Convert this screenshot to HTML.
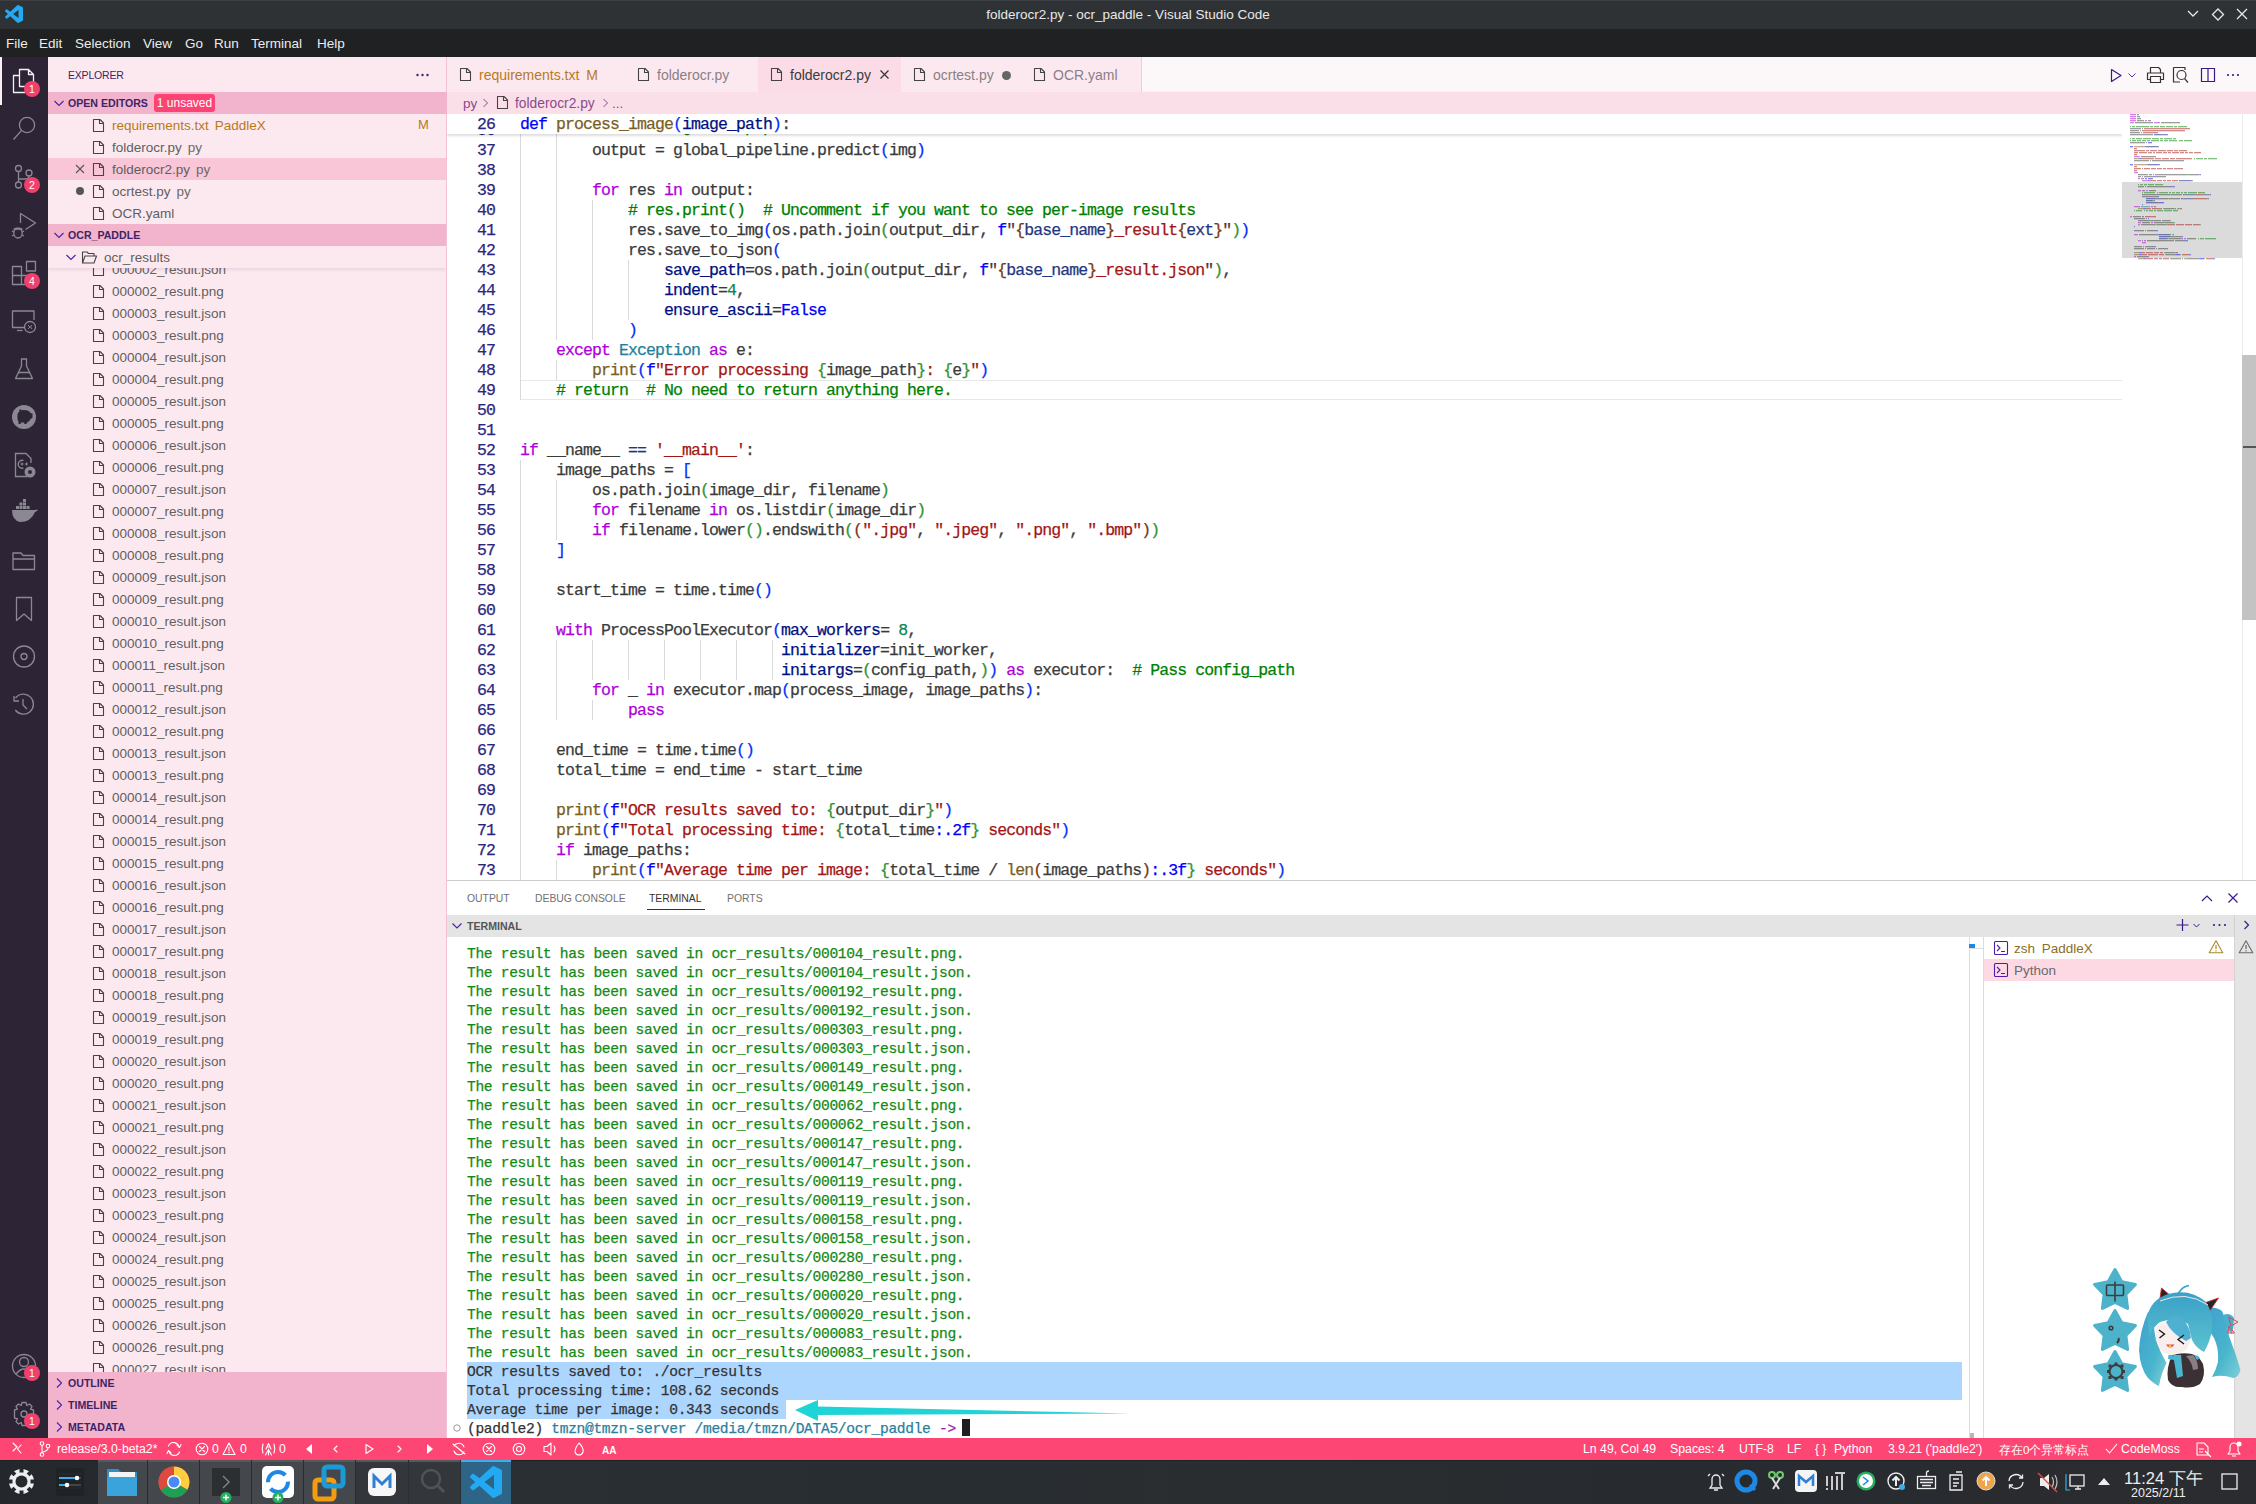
<!DOCTYPE html>
<html><head><meta charset="utf-8"><title>VS Code</title>
<style>
*{margin:0;padding:0;box-sizing:border-box}
html,body{width:2256px;height:1504px;overflow:hidden;background:#fff;font-family:"Liberation Sans",sans-serif;}
.a{position:absolute}
.mono{font-family:"Liberation Mono",monospace;-webkit-text-stroke:0.25px currentColor}
#title{left:0;top:0;width:2256px;height:29px;background:#2f3235}
#menu{left:0;top:29px;width:2256px;height:28px;background:#1f2123}
#act{left:0;top:57px;width:48px;height:1381px;background:#2d2536}
#side{left:48px;top:57px;width:399px;height:1381px;background:#fce9f0}
#tabs{left:447px;top:57px;width:1809px;height:35px;background:#fcf7f9;border-bottom:1px solid #f6f1f3}
#crumb{left:447px;top:92px;width:1809px;height:22px;background:#fbdfe8}
#code{left:447px;top:114px;width:1809px;height:767px;background:#fff}
#panel{left:447px;top:880px;width:1809px;height:558px;background:#fff;border-top:1px solid #cdcdcd}
#status{left:0;top:1438px;width:2256px;height:22px;background:#fd4673}
#task{left:0;top:1460px;width:2256px;height:44px;background:#2b2f33}

</style></head><body>
<div id="title" class="a"><div class="a" style="left:0;top:0;width:2256px;height:1px;background:#3c4044"></div>
<svg class="a" style="left:5px;top:5px" width="18" height="18" viewBox="0 0 100 100"><path fill="#23a9f2" d="M96.46 10.8 L75.86 0.87 a6.23 6.23 0 0 0-7.1 1.2 L29.35 38.04 12.19 25.01 a4.16 4.16 0 0 0-5.32.24 L1.36 30.26 a4.16 4.16 0 0 0 0 6.16 L16.26 50 1.36 63.58 a4.16 4.16 0 0 0 0 6.16 l5.51 5.01 a4.16 4.16 0 0 0 5.32.24 l17.16-13.03 39.41 35.97 a6.23 6.23 0 0 0 7.1 1.2 l20.6-9.92 A6.24 6.24 0 0 0 100 83.58 V16.42 a6.24 6.24 0 0 0-3.54-5.62 Z M75.02 72.7 45.11 50 l29.91-22.7 Z"/></svg>
<div class="a" style="left:0;width:2256px;top:7px;text-align:center;color:#e8e8e8;font-size:13.5px;line-height:16px">folderocr2.py - ocr_paddle - Visual Studio Code</div>
<svg class="a" style="left:2180px;top:4px" width="76" height="22" viewBox="0 0 76 22"><g fill="none" stroke="#e8e8e8" stroke-width="1.3"><path d="M8 7 L13 12 L18 7"/><path d="M38 5 L43.5 10.5 L38 16 L32.5 10.5 Z"/><path d="M57 5 L67 15 M67 5 L57 15"/></g></svg>
</div>
<div id="menu" class="a">
<div class="a" style="top:7px;left:7px;color:#ececec;font-size:13.5px;line-height:16px;white-space:nowrap">
<span class="a" style="left:-1px">File</span><span class="a" style="left:32px">Edit</span><span class="a" style="left:68px">Selection</span><span class="a" style="left:136px">View</span><span class="a" style="left:178px">Go</span><span class="a" style="left:207px">Run</span><span class="a" style="left:244px">Terminal</span><span class="a" style="left:310px">Help</span>
</div></div>
<div id="act" class="a"></div>
<div class="a" style="left:0;top:57px;width:2px;height:48px;background:#fdeef3"></div>
<svg class="a" style="left:0;top:57px" width="48" height="1381" viewBox="0 57 48 1381">
<g fill="none" stroke="#8c8893" stroke-width="1.3" stroke-linejoin="round">
<!-- explorer (active, white) -->
<g stroke="#f4f0f4">
<path d="M19.5 75.5 H13.5 V92.5 H25"/>
<path d="M19.5 69.5 H28.5 L33.5 74.5 V86.5 H19.5 Z M28.5 69.5 V74.5 H33.5"/>
</g>
<!-- search -->
<circle cx="27" cy="125" r="7.6"/><path d="M21.6 130.4 L13.5 139.5"/>
<!-- scm -->
<circle cx="18.5" cy="168.5" r="3"/><circle cx="18.5" cy="185" r="3"/><circle cx="29" cy="173" r="3"/>
<path d="M18.5 171.5 V182 M18.5 179 H25 Q29 179 29 176"/>
<!-- run debug -->
<path d="M20.5 223 V213.5 L35.5 223 L25.5 229.5"/>
<ellipse cx="18" cy="233" rx="4.2" ry="5"/><path d="M13.5 229 H22.5 M12 231 L14 232 M12 236 L14 235 M24 231 L22 232 M24 236 L22 235 M15 228 L16.5 230 M21 228 L19.5 230"/>
<!-- extensions -->
<path d="M12.5 266.5 H21.5 V284.5 H12.5 Z M12.5 275.5 H30.5 V284.5 H21.5"/><rect x="26.5" y="261.5" width="9" height="9.5"/>
<!-- remote -->
<path d="M25 327.5 H12.5 V311 H34 V320"/><path d="M17 330.5 H22.5"/><circle cx="30" cy="327" r="5.5"/><path d="M28 325 L30 327 L28 329 M32 325 L30.5 327 L32 329" stroke-width="1"/>
<!-- testing -->
<path d="M21 359 H27 M21.5 359 V366 L15.5 378.5 H32.5 L26.5 366 V359 M18 372.5 H30"/>
<!-- folder -->
<path d="M13 553 H21 L23 555.5 H34.5 V569.5 H13 Z M13 559 H34.5"/>
<!-- bookmark -->
<path d="M16.5 597.5 H31.5 V620.5 L24 614 L16.5 620.5 Z"/>
<!-- target -->
<circle cx="24" cy="656.5" r="10.5"/><circle cx="24" cy="656.5" r="3"/>
<!-- history -->
<path d="M15.5 698 A10 10 0 1 1 15.3 710" /><path d="M14 696 V701 H19"/><path d="M23 699 V705 L27 709"/>
<!-- accounts -->
<circle cx="24" cy="1366" r="11.5"/><circle cx="24" cy="1362" r="4.5"/><path d="M16 1374 Q24 1364 32 1374"/>
<!-- settings -->
<circle cx="24" cy="1414" r="3"/>
<path d="M22 1402.5 H26 L26.8 1405.5 L29.5 1404 L32 1406.5 L30.5 1409.2 L33.5 1410 V1418 L30.5 1418.8 L32 1421.5 L29.5 1424 L26.8 1422.5 L26 1425.5 H22 L21.2 1422.5 L18.5 1424 L16 1421.5 L17.5 1418.8 L14.5 1418 V1410 L17.5 1409.2 L16 1406.5 L18.5 1404 L21.2 1405.5 Z"/>
</g>
<g fill="#8c8893">
<!-- piggy circle -->
<circle cx="24" cy="417" r="12"/>
<!-- docker -->
<path d="M12 510 H35 Q37 509 38 510 Q36 512 35 512 Q31 522 20 522 Q12 520 12 510 Z"/>
<rect x="16" y="506" width="3" height="3"/><rect x="19.5" y="506" width="3" height="3"/><rect x="23" y="506" width="3" height="3"/><rect x="19.5" y="502.5" width="3" height="3"/><rect x="23" y="502.5" width="3" height="3"/><rect x="23" y="499" width="3" height="3"/><rect x="26.5" y="506" width="3" height="3"/>
</g>
<path d="M17.5 414 Q19 410 24 410 Q29 410 30.5 413 L32.5 413.5 V418 L30.5 419 Q29.5 422 27 422.5 L26.5 424 H24.5 L24 422.5 H21 L20.5 424 H18.5 L18.5 421.5 Q17 420 17.5 414 Z M19 411 L20 409 L22 410.5 Z" fill="#2d2536"/>
<!-- c++ page -->
<g fill="none" stroke="#8c8893" stroke-width="1.3"><path d="M27 476.5 H15.5 V453.5 H26 L31 458.5 V463"/><path d="M23.5 460.5 A4 4 0 1 0 23.5 468"/></g>
<g fill="#8c8893"><circle cx="30" cy="472" r="5.5"/><path d="M20.5 464 h3 M22 462.5 v3 M25 464 h3 M26.5 462.5 v3" stroke="#8c8893" stroke-width="1"/></g>
<circle cx="30" cy="472" r="2" fill="#2d2536"/>
<!-- badges -->
<g fill="#f0406c"><circle cx="32" cy="89" r="8"/><circle cx="32" cy="185" r="8"/><circle cx="32" cy="281" r="8"/><circle cx="32" cy="1373" r="8"/><circle cx="32" cy="1421" r="8"/></g>
<g fill="#fff" font-family="Liberation Sans" font-size="10.5" text-anchor="middle"><text x="32" y="92.8">1</text><text x="32" y="188.8">2</text><text x="32" y="284.8">4</text><text x="32" y="1376.8">1</text><text x="32" y="1424.8">1</text></g>
</svg>
<div id="side" class="a"></div>
<div class="a" style="left:48px;top:57px;width:399px;height:35px;">
<div class="a" style="left:20px;top:11px;font-size:10.5px;line-height:14px;color:#3d2466;letter-spacing:-0.2px">EXPLORER</div>
<svg class="a" style="left:366px;top:10px" width="16" height="16" viewBox="0 0 16 16"><g fill="#3d2466"><circle cx="3.5" cy="8" r="1.2"/><circle cx="8.5" cy="8" r="1.2"/><circle cx="13.5" cy="8" r="1.2"/></g></svg>
</div>
<div class="a" style="left:48px;top:92px;width:399px;height:22px;background:#f2b4cc"><svg class="a" style="left:5px;top:5px" width="12" height="12" viewBox="0 0 12 12"><path d="M1.5 4 L6 8.5 L10.5 4" fill="none" stroke="#4a1fa8" stroke-width="1.1"/></svg><div class="a" style="left:20px;top:4px;font-size:10.6px;line-height:14px;font-weight:bold;color:#3d2466;white-space:nowrap">OPEN EDITORS</div><div class="a" style="left:106px;top:2px;width:61px;height:18px;background:#fd4373;border-radius:3px;color:#fff;font-size:12px;line-height:19px;text-align:center">1 unsaved</div></div>
<div class="a" style="left:48px;top:114px;width:398px;height:22px;"><svg class="a" style="left:44px;top:4px" width="13" height="15" viewBox="0 0 13 15"><path d="M1.5 1.5 H8 L11.5 5 V13.5 H1.5 Z M7.5 1.5 V5.5 H11.5" fill="none" stroke="#444" stroke-width="1.1" stroke-linejoin="round"/></svg><div class="a" style="left:64px;top:4px;font-size:13.5px;line-height:16px;color:#b8791a;white-space:nowrap">requirements.txt<span style="color:#b8791a;margin-left:6px">PaddleX</span></div><div class="a" style="left:370px;top:3px;font-size:13px;line-height:16px;color:#b8791a">M</div></div>
<div class="a" style="left:48px;top:136px;width:398px;height:22px;"><svg class="a" style="left:44px;top:4px" width="13" height="15" viewBox="0 0 13 15"><path d="M1.5 1.5 H8 L11.5 5 V13.5 H1.5 Z M7.5 1.5 V5.5 H11.5" fill="none" stroke="#444" stroke-width="1.1" stroke-linejoin="round"/></svg><div class="a" style="left:64px;top:4px;font-size:13.5px;line-height:16px;color:#5f5f5f;white-space:nowrap">folderocr.py<span style="color:#6a6a6a;margin-left:6px">py</span></div></div>
<div class="a" style="left:48px;top:158px;width:398px;height:22px;background:#f9c6d8;"><svg class="a" style="left:44px;top:4px" width="13" height="15" viewBox="0 0 13 15"><path d="M1.5 1.5 H8 L11.5 5 V13.5 H1.5 Z M7.5 1.5 V5.5 H11.5" fill="none" stroke="#444" stroke-width="1.1" stroke-linejoin="round"/></svg><div class="a" style="left:64px;top:4px;font-size:13.5px;line-height:16px;color:#5f5f5f;white-space:nowrap">folderocr2.py<span style="color:#6a6a6a;margin-left:6px">py</span></div><svg class="a" style="left:26px;top:5px" width="12" height="12" viewBox="0 0 12 12"><path d="M2 2 L10 10 M10 2 L2 10" stroke="#555" stroke-width="1.1"/></svg></div>
<div class="a" style="left:48px;top:180px;width:398px;height:22px;"><svg class="a" style="left:44px;top:4px" width="13" height="15" viewBox="0 0 13 15"><path d="M1.5 1.5 H8 L11.5 5 V13.5 H1.5 Z M7.5 1.5 V5.5 H11.5" fill="none" stroke="#444" stroke-width="1.1" stroke-linejoin="round"/></svg><div class="a" style="left:64px;top:4px;font-size:13.5px;line-height:16px;color:#5f5f5f;white-space:nowrap">ocrtest.py<span style="color:#6a6a6a;margin-left:6px">py</span></div><div class="a" style="left:28px;top:7px;width:8px;height:8px;border-radius:4px;background:#555"></div></div>
<div class="a" style="left:48px;top:202px;width:398px;height:22px;"><svg class="a" style="left:44px;top:4px" width="13" height="15" viewBox="0 0 13 15"><path d="M1.5 1.5 H8 L11.5 5 V13.5 H1.5 Z M7.5 1.5 V5.5 H11.5" fill="none" stroke="#444" stroke-width="1.1" stroke-linejoin="round"/></svg><div class="a" style="left:64px;top:4px;font-size:13.5px;line-height:16px;color:#5f5f5f;white-space:nowrap">OCR.yaml<span style="color:#6a6a6a;margin-left:6px"></span></div></div>
<div class="a" style="left:48px;top:224px;width:399px;height:22px;background:#f2b4cc"><svg class="a" style="left:5px;top:5px" width="12" height="12" viewBox="0 0 12 12"><path d="M1.5 4 L6 8.5 L10.5 4" fill="none" stroke="#4a1fa8" stroke-width="1.1"/></svg><div class="a" style="left:20px;top:4px;font-size:10.6px;line-height:14px;font-weight:bold;color:#3d2466;white-space:nowrap">OCR_PADDLE</div></div>
<div class="a" style="left:48px;top:268px;width:398px;height:1104px;overflow:hidden">
<div class="a" style="left:0;top:-10px;width:398px;height:22px"><svg class="a" style="left:44px;top:4px" width="13" height="15" viewBox="0 0 13 15"><path d="M1.5 1.5 H8 L11.5 5 V13.5 H1.5 Z M7.5 1.5 V5.5 H11.5" fill="none" stroke="#444" stroke-width="1.1" stroke-linejoin="round"/></svg><div class="a" style="left:64px;top:4px;font-size:13.5px;line-height:16px;color:#5f5f5f;white-space:nowrap">000002_result.json</div></div>
<div class="a" style="left:0;top:12px;width:398px;height:22px"><svg class="a" style="left:44px;top:4px" width="13" height="15" viewBox="0 0 13 15"><path d="M1.5 1.5 H8 L11.5 5 V13.5 H1.5 Z M7.5 1.5 V5.5 H11.5" fill="none" stroke="#444" stroke-width="1.1" stroke-linejoin="round"/></svg><div class="a" style="left:64px;top:4px;font-size:13.5px;line-height:16px;color:#5f5f5f;white-space:nowrap">000002_result.png</div></div>
<div class="a" style="left:0;top:34px;width:398px;height:22px"><svg class="a" style="left:44px;top:4px" width="13" height="15" viewBox="0 0 13 15"><path d="M1.5 1.5 H8 L11.5 5 V13.5 H1.5 Z M7.5 1.5 V5.5 H11.5" fill="none" stroke="#444" stroke-width="1.1" stroke-linejoin="round"/></svg><div class="a" style="left:64px;top:4px;font-size:13.5px;line-height:16px;color:#5f5f5f;white-space:nowrap">000003_result.json</div></div>
<div class="a" style="left:0;top:56px;width:398px;height:22px"><svg class="a" style="left:44px;top:4px" width="13" height="15" viewBox="0 0 13 15"><path d="M1.5 1.5 H8 L11.5 5 V13.5 H1.5 Z M7.5 1.5 V5.5 H11.5" fill="none" stroke="#444" stroke-width="1.1" stroke-linejoin="round"/></svg><div class="a" style="left:64px;top:4px;font-size:13.5px;line-height:16px;color:#5f5f5f;white-space:nowrap">000003_result.png</div></div>
<div class="a" style="left:0;top:78px;width:398px;height:22px"><svg class="a" style="left:44px;top:4px" width="13" height="15" viewBox="0 0 13 15"><path d="M1.5 1.5 H8 L11.5 5 V13.5 H1.5 Z M7.5 1.5 V5.5 H11.5" fill="none" stroke="#444" stroke-width="1.1" stroke-linejoin="round"/></svg><div class="a" style="left:64px;top:4px;font-size:13.5px;line-height:16px;color:#5f5f5f;white-space:nowrap">000004_result.json</div></div>
<div class="a" style="left:0;top:100px;width:398px;height:22px"><svg class="a" style="left:44px;top:4px" width="13" height="15" viewBox="0 0 13 15"><path d="M1.5 1.5 H8 L11.5 5 V13.5 H1.5 Z M7.5 1.5 V5.5 H11.5" fill="none" stroke="#444" stroke-width="1.1" stroke-linejoin="round"/></svg><div class="a" style="left:64px;top:4px;font-size:13.5px;line-height:16px;color:#5f5f5f;white-space:nowrap">000004_result.png</div></div>
<div class="a" style="left:0;top:122px;width:398px;height:22px"><svg class="a" style="left:44px;top:4px" width="13" height="15" viewBox="0 0 13 15"><path d="M1.5 1.5 H8 L11.5 5 V13.5 H1.5 Z M7.5 1.5 V5.5 H11.5" fill="none" stroke="#444" stroke-width="1.1" stroke-linejoin="round"/></svg><div class="a" style="left:64px;top:4px;font-size:13.5px;line-height:16px;color:#5f5f5f;white-space:nowrap">000005_result.json</div></div>
<div class="a" style="left:0;top:144px;width:398px;height:22px"><svg class="a" style="left:44px;top:4px" width="13" height="15" viewBox="0 0 13 15"><path d="M1.5 1.5 H8 L11.5 5 V13.5 H1.5 Z M7.5 1.5 V5.5 H11.5" fill="none" stroke="#444" stroke-width="1.1" stroke-linejoin="round"/></svg><div class="a" style="left:64px;top:4px;font-size:13.5px;line-height:16px;color:#5f5f5f;white-space:nowrap">000005_result.png</div></div>
<div class="a" style="left:0;top:166px;width:398px;height:22px"><svg class="a" style="left:44px;top:4px" width="13" height="15" viewBox="0 0 13 15"><path d="M1.5 1.5 H8 L11.5 5 V13.5 H1.5 Z M7.5 1.5 V5.5 H11.5" fill="none" stroke="#444" stroke-width="1.1" stroke-linejoin="round"/></svg><div class="a" style="left:64px;top:4px;font-size:13.5px;line-height:16px;color:#5f5f5f;white-space:nowrap">000006_result.json</div></div>
<div class="a" style="left:0;top:188px;width:398px;height:22px"><svg class="a" style="left:44px;top:4px" width="13" height="15" viewBox="0 0 13 15"><path d="M1.5 1.5 H8 L11.5 5 V13.5 H1.5 Z M7.5 1.5 V5.5 H11.5" fill="none" stroke="#444" stroke-width="1.1" stroke-linejoin="round"/></svg><div class="a" style="left:64px;top:4px;font-size:13.5px;line-height:16px;color:#5f5f5f;white-space:nowrap">000006_result.png</div></div>
<div class="a" style="left:0;top:210px;width:398px;height:22px"><svg class="a" style="left:44px;top:4px" width="13" height="15" viewBox="0 0 13 15"><path d="M1.5 1.5 H8 L11.5 5 V13.5 H1.5 Z M7.5 1.5 V5.5 H11.5" fill="none" stroke="#444" stroke-width="1.1" stroke-linejoin="round"/></svg><div class="a" style="left:64px;top:4px;font-size:13.5px;line-height:16px;color:#5f5f5f;white-space:nowrap">000007_result.json</div></div>
<div class="a" style="left:0;top:232px;width:398px;height:22px"><svg class="a" style="left:44px;top:4px" width="13" height="15" viewBox="0 0 13 15"><path d="M1.5 1.5 H8 L11.5 5 V13.5 H1.5 Z M7.5 1.5 V5.5 H11.5" fill="none" stroke="#444" stroke-width="1.1" stroke-linejoin="round"/></svg><div class="a" style="left:64px;top:4px;font-size:13.5px;line-height:16px;color:#5f5f5f;white-space:nowrap">000007_result.png</div></div>
<div class="a" style="left:0;top:254px;width:398px;height:22px"><svg class="a" style="left:44px;top:4px" width="13" height="15" viewBox="0 0 13 15"><path d="M1.5 1.5 H8 L11.5 5 V13.5 H1.5 Z M7.5 1.5 V5.5 H11.5" fill="none" stroke="#444" stroke-width="1.1" stroke-linejoin="round"/></svg><div class="a" style="left:64px;top:4px;font-size:13.5px;line-height:16px;color:#5f5f5f;white-space:nowrap">000008_result.json</div></div>
<div class="a" style="left:0;top:276px;width:398px;height:22px"><svg class="a" style="left:44px;top:4px" width="13" height="15" viewBox="0 0 13 15"><path d="M1.5 1.5 H8 L11.5 5 V13.5 H1.5 Z M7.5 1.5 V5.5 H11.5" fill="none" stroke="#444" stroke-width="1.1" stroke-linejoin="round"/></svg><div class="a" style="left:64px;top:4px;font-size:13.5px;line-height:16px;color:#5f5f5f;white-space:nowrap">000008_result.png</div></div>
<div class="a" style="left:0;top:298px;width:398px;height:22px"><svg class="a" style="left:44px;top:4px" width="13" height="15" viewBox="0 0 13 15"><path d="M1.5 1.5 H8 L11.5 5 V13.5 H1.5 Z M7.5 1.5 V5.5 H11.5" fill="none" stroke="#444" stroke-width="1.1" stroke-linejoin="round"/></svg><div class="a" style="left:64px;top:4px;font-size:13.5px;line-height:16px;color:#5f5f5f;white-space:nowrap">000009_result.json</div></div>
<div class="a" style="left:0;top:320px;width:398px;height:22px"><svg class="a" style="left:44px;top:4px" width="13" height="15" viewBox="0 0 13 15"><path d="M1.5 1.5 H8 L11.5 5 V13.5 H1.5 Z M7.5 1.5 V5.5 H11.5" fill="none" stroke="#444" stroke-width="1.1" stroke-linejoin="round"/></svg><div class="a" style="left:64px;top:4px;font-size:13.5px;line-height:16px;color:#5f5f5f;white-space:nowrap">000009_result.png</div></div>
<div class="a" style="left:0;top:342px;width:398px;height:22px"><svg class="a" style="left:44px;top:4px" width="13" height="15" viewBox="0 0 13 15"><path d="M1.5 1.5 H8 L11.5 5 V13.5 H1.5 Z M7.5 1.5 V5.5 H11.5" fill="none" stroke="#444" stroke-width="1.1" stroke-linejoin="round"/></svg><div class="a" style="left:64px;top:4px;font-size:13.5px;line-height:16px;color:#5f5f5f;white-space:nowrap">000010_result.json</div></div>
<div class="a" style="left:0;top:364px;width:398px;height:22px"><svg class="a" style="left:44px;top:4px" width="13" height="15" viewBox="0 0 13 15"><path d="M1.5 1.5 H8 L11.5 5 V13.5 H1.5 Z M7.5 1.5 V5.5 H11.5" fill="none" stroke="#444" stroke-width="1.1" stroke-linejoin="round"/></svg><div class="a" style="left:64px;top:4px;font-size:13.5px;line-height:16px;color:#5f5f5f;white-space:nowrap">000010_result.png</div></div>
<div class="a" style="left:0;top:386px;width:398px;height:22px"><svg class="a" style="left:44px;top:4px" width="13" height="15" viewBox="0 0 13 15"><path d="M1.5 1.5 H8 L11.5 5 V13.5 H1.5 Z M7.5 1.5 V5.5 H11.5" fill="none" stroke="#444" stroke-width="1.1" stroke-linejoin="round"/></svg><div class="a" style="left:64px;top:4px;font-size:13.5px;line-height:16px;color:#5f5f5f;white-space:nowrap">000011_result.json</div></div>
<div class="a" style="left:0;top:408px;width:398px;height:22px"><svg class="a" style="left:44px;top:4px" width="13" height="15" viewBox="0 0 13 15"><path d="M1.5 1.5 H8 L11.5 5 V13.5 H1.5 Z M7.5 1.5 V5.5 H11.5" fill="none" stroke="#444" stroke-width="1.1" stroke-linejoin="round"/></svg><div class="a" style="left:64px;top:4px;font-size:13.5px;line-height:16px;color:#5f5f5f;white-space:nowrap">000011_result.png</div></div>
<div class="a" style="left:0;top:430px;width:398px;height:22px"><svg class="a" style="left:44px;top:4px" width="13" height="15" viewBox="0 0 13 15"><path d="M1.5 1.5 H8 L11.5 5 V13.5 H1.5 Z M7.5 1.5 V5.5 H11.5" fill="none" stroke="#444" stroke-width="1.1" stroke-linejoin="round"/></svg><div class="a" style="left:64px;top:4px;font-size:13.5px;line-height:16px;color:#5f5f5f;white-space:nowrap">000012_result.json</div></div>
<div class="a" style="left:0;top:452px;width:398px;height:22px"><svg class="a" style="left:44px;top:4px" width="13" height="15" viewBox="0 0 13 15"><path d="M1.5 1.5 H8 L11.5 5 V13.5 H1.5 Z M7.5 1.5 V5.5 H11.5" fill="none" stroke="#444" stroke-width="1.1" stroke-linejoin="round"/></svg><div class="a" style="left:64px;top:4px;font-size:13.5px;line-height:16px;color:#5f5f5f;white-space:nowrap">000012_result.png</div></div>
<div class="a" style="left:0;top:474px;width:398px;height:22px"><svg class="a" style="left:44px;top:4px" width="13" height="15" viewBox="0 0 13 15"><path d="M1.5 1.5 H8 L11.5 5 V13.5 H1.5 Z M7.5 1.5 V5.5 H11.5" fill="none" stroke="#444" stroke-width="1.1" stroke-linejoin="round"/></svg><div class="a" style="left:64px;top:4px;font-size:13.5px;line-height:16px;color:#5f5f5f;white-space:nowrap">000013_result.json</div></div>
<div class="a" style="left:0;top:496px;width:398px;height:22px"><svg class="a" style="left:44px;top:4px" width="13" height="15" viewBox="0 0 13 15"><path d="M1.5 1.5 H8 L11.5 5 V13.5 H1.5 Z M7.5 1.5 V5.5 H11.5" fill="none" stroke="#444" stroke-width="1.1" stroke-linejoin="round"/></svg><div class="a" style="left:64px;top:4px;font-size:13.5px;line-height:16px;color:#5f5f5f;white-space:nowrap">000013_result.png</div></div>
<div class="a" style="left:0;top:518px;width:398px;height:22px"><svg class="a" style="left:44px;top:4px" width="13" height="15" viewBox="0 0 13 15"><path d="M1.5 1.5 H8 L11.5 5 V13.5 H1.5 Z M7.5 1.5 V5.5 H11.5" fill="none" stroke="#444" stroke-width="1.1" stroke-linejoin="round"/></svg><div class="a" style="left:64px;top:4px;font-size:13.5px;line-height:16px;color:#5f5f5f;white-space:nowrap">000014_result.json</div></div>
<div class="a" style="left:0;top:540px;width:398px;height:22px"><svg class="a" style="left:44px;top:4px" width="13" height="15" viewBox="0 0 13 15"><path d="M1.5 1.5 H8 L11.5 5 V13.5 H1.5 Z M7.5 1.5 V5.5 H11.5" fill="none" stroke="#444" stroke-width="1.1" stroke-linejoin="round"/></svg><div class="a" style="left:64px;top:4px;font-size:13.5px;line-height:16px;color:#5f5f5f;white-space:nowrap">000014_result.png</div></div>
<div class="a" style="left:0;top:562px;width:398px;height:22px"><svg class="a" style="left:44px;top:4px" width="13" height="15" viewBox="0 0 13 15"><path d="M1.5 1.5 H8 L11.5 5 V13.5 H1.5 Z M7.5 1.5 V5.5 H11.5" fill="none" stroke="#444" stroke-width="1.1" stroke-linejoin="round"/></svg><div class="a" style="left:64px;top:4px;font-size:13.5px;line-height:16px;color:#5f5f5f;white-space:nowrap">000015_result.json</div></div>
<div class="a" style="left:0;top:584px;width:398px;height:22px"><svg class="a" style="left:44px;top:4px" width="13" height="15" viewBox="0 0 13 15"><path d="M1.5 1.5 H8 L11.5 5 V13.5 H1.5 Z M7.5 1.5 V5.5 H11.5" fill="none" stroke="#444" stroke-width="1.1" stroke-linejoin="round"/></svg><div class="a" style="left:64px;top:4px;font-size:13.5px;line-height:16px;color:#5f5f5f;white-space:nowrap">000015_result.png</div></div>
<div class="a" style="left:0;top:606px;width:398px;height:22px"><svg class="a" style="left:44px;top:4px" width="13" height="15" viewBox="0 0 13 15"><path d="M1.5 1.5 H8 L11.5 5 V13.5 H1.5 Z M7.5 1.5 V5.5 H11.5" fill="none" stroke="#444" stroke-width="1.1" stroke-linejoin="round"/></svg><div class="a" style="left:64px;top:4px;font-size:13.5px;line-height:16px;color:#5f5f5f;white-space:nowrap">000016_result.json</div></div>
<div class="a" style="left:0;top:628px;width:398px;height:22px"><svg class="a" style="left:44px;top:4px" width="13" height="15" viewBox="0 0 13 15"><path d="M1.5 1.5 H8 L11.5 5 V13.5 H1.5 Z M7.5 1.5 V5.5 H11.5" fill="none" stroke="#444" stroke-width="1.1" stroke-linejoin="round"/></svg><div class="a" style="left:64px;top:4px;font-size:13.5px;line-height:16px;color:#5f5f5f;white-space:nowrap">000016_result.png</div></div>
<div class="a" style="left:0;top:650px;width:398px;height:22px"><svg class="a" style="left:44px;top:4px" width="13" height="15" viewBox="0 0 13 15"><path d="M1.5 1.5 H8 L11.5 5 V13.5 H1.5 Z M7.5 1.5 V5.5 H11.5" fill="none" stroke="#444" stroke-width="1.1" stroke-linejoin="round"/></svg><div class="a" style="left:64px;top:4px;font-size:13.5px;line-height:16px;color:#5f5f5f;white-space:nowrap">000017_result.json</div></div>
<div class="a" style="left:0;top:672px;width:398px;height:22px"><svg class="a" style="left:44px;top:4px" width="13" height="15" viewBox="0 0 13 15"><path d="M1.5 1.5 H8 L11.5 5 V13.5 H1.5 Z M7.5 1.5 V5.5 H11.5" fill="none" stroke="#444" stroke-width="1.1" stroke-linejoin="round"/></svg><div class="a" style="left:64px;top:4px;font-size:13.5px;line-height:16px;color:#5f5f5f;white-space:nowrap">000017_result.png</div></div>
<div class="a" style="left:0;top:694px;width:398px;height:22px"><svg class="a" style="left:44px;top:4px" width="13" height="15" viewBox="0 0 13 15"><path d="M1.5 1.5 H8 L11.5 5 V13.5 H1.5 Z M7.5 1.5 V5.5 H11.5" fill="none" stroke="#444" stroke-width="1.1" stroke-linejoin="round"/></svg><div class="a" style="left:64px;top:4px;font-size:13.5px;line-height:16px;color:#5f5f5f;white-space:nowrap">000018_result.json</div></div>
<div class="a" style="left:0;top:716px;width:398px;height:22px"><svg class="a" style="left:44px;top:4px" width="13" height="15" viewBox="0 0 13 15"><path d="M1.5 1.5 H8 L11.5 5 V13.5 H1.5 Z M7.5 1.5 V5.5 H11.5" fill="none" stroke="#444" stroke-width="1.1" stroke-linejoin="round"/></svg><div class="a" style="left:64px;top:4px;font-size:13.5px;line-height:16px;color:#5f5f5f;white-space:nowrap">000018_result.png</div></div>
<div class="a" style="left:0;top:738px;width:398px;height:22px"><svg class="a" style="left:44px;top:4px" width="13" height="15" viewBox="0 0 13 15"><path d="M1.5 1.5 H8 L11.5 5 V13.5 H1.5 Z M7.5 1.5 V5.5 H11.5" fill="none" stroke="#444" stroke-width="1.1" stroke-linejoin="round"/></svg><div class="a" style="left:64px;top:4px;font-size:13.5px;line-height:16px;color:#5f5f5f;white-space:nowrap">000019_result.json</div></div>
<div class="a" style="left:0;top:760px;width:398px;height:22px"><svg class="a" style="left:44px;top:4px" width="13" height="15" viewBox="0 0 13 15"><path d="M1.5 1.5 H8 L11.5 5 V13.5 H1.5 Z M7.5 1.5 V5.5 H11.5" fill="none" stroke="#444" stroke-width="1.1" stroke-linejoin="round"/></svg><div class="a" style="left:64px;top:4px;font-size:13.5px;line-height:16px;color:#5f5f5f;white-space:nowrap">000019_result.png</div></div>
<div class="a" style="left:0;top:782px;width:398px;height:22px"><svg class="a" style="left:44px;top:4px" width="13" height="15" viewBox="0 0 13 15"><path d="M1.5 1.5 H8 L11.5 5 V13.5 H1.5 Z M7.5 1.5 V5.5 H11.5" fill="none" stroke="#444" stroke-width="1.1" stroke-linejoin="round"/></svg><div class="a" style="left:64px;top:4px;font-size:13.5px;line-height:16px;color:#5f5f5f;white-space:nowrap">000020_result.json</div></div>
<div class="a" style="left:0;top:804px;width:398px;height:22px"><svg class="a" style="left:44px;top:4px" width="13" height="15" viewBox="0 0 13 15"><path d="M1.5 1.5 H8 L11.5 5 V13.5 H1.5 Z M7.5 1.5 V5.5 H11.5" fill="none" stroke="#444" stroke-width="1.1" stroke-linejoin="round"/></svg><div class="a" style="left:64px;top:4px;font-size:13.5px;line-height:16px;color:#5f5f5f;white-space:nowrap">000020_result.png</div></div>
<div class="a" style="left:0;top:826px;width:398px;height:22px"><svg class="a" style="left:44px;top:4px" width="13" height="15" viewBox="0 0 13 15"><path d="M1.5 1.5 H8 L11.5 5 V13.5 H1.5 Z M7.5 1.5 V5.5 H11.5" fill="none" stroke="#444" stroke-width="1.1" stroke-linejoin="round"/></svg><div class="a" style="left:64px;top:4px;font-size:13.5px;line-height:16px;color:#5f5f5f;white-space:nowrap">000021_result.json</div></div>
<div class="a" style="left:0;top:848px;width:398px;height:22px"><svg class="a" style="left:44px;top:4px" width="13" height="15" viewBox="0 0 13 15"><path d="M1.5 1.5 H8 L11.5 5 V13.5 H1.5 Z M7.5 1.5 V5.5 H11.5" fill="none" stroke="#444" stroke-width="1.1" stroke-linejoin="round"/></svg><div class="a" style="left:64px;top:4px;font-size:13.5px;line-height:16px;color:#5f5f5f;white-space:nowrap">000021_result.png</div></div>
<div class="a" style="left:0;top:870px;width:398px;height:22px"><svg class="a" style="left:44px;top:4px" width="13" height="15" viewBox="0 0 13 15"><path d="M1.5 1.5 H8 L11.5 5 V13.5 H1.5 Z M7.5 1.5 V5.5 H11.5" fill="none" stroke="#444" stroke-width="1.1" stroke-linejoin="round"/></svg><div class="a" style="left:64px;top:4px;font-size:13.5px;line-height:16px;color:#5f5f5f;white-space:nowrap">000022_result.json</div></div>
<div class="a" style="left:0;top:892px;width:398px;height:22px"><svg class="a" style="left:44px;top:4px" width="13" height="15" viewBox="0 0 13 15"><path d="M1.5 1.5 H8 L11.5 5 V13.5 H1.5 Z M7.5 1.5 V5.5 H11.5" fill="none" stroke="#444" stroke-width="1.1" stroke-linejoin="round"/></svg><div class="a" style="left:64px;top:4px;font-size:13.5px;line-height:16px;color:#5f5f5f;white-space:nowrap">000022_result.png</div></div>
<div class="a" style="left:0;top:914px;width:398px;height:22px"><svg class="a" style="left:44px;top:4px" width="13" height="15" viewBox="0 0 13 15"><path d="M1.5 1.5 H8 L11.5 5 V13.5 H1.5 Z M7.5 1.5 V5.5 H11.5" fill="none" stroke="#444" stroke-width="1.1" stroke-linejoin="round"/></svg><div class="a" style="left:64px;top:4px;font-size:13.5px;line-height:16px;color:#5f5f5f;white-space:nowrap">000023_result.json</div></div>
<div class="a" style="left:0;top:936px;width:398px;height:22px"><svg class="a" style="left:44px;top:4px" width="13" height="15" viewBox="0 0 13 15"><path d="M1.5 1.5 H8 L11.5 5 V13.5 H1.5 Z M7.5 1.5 V5.5 H11.5" fill="none" stroke="#444" stroke-width="1.1" stroke-linejoin="round"/></svg><div class="a" style="left:64px;top:4px;font-size:13.5px;line-height:16px;color:#5f5f5f;white-space:nowrap">000023_result.png</div></div>
<div class="a" style="left:0;top:958px;width:398px;height:22px"><svg class="a" style="left:44px;top:4px" width="13" height="15" viewBox="0 0 13 15"><path d="M1.5 1.5 H8 L11.5 5 V13.5 H1.5 Z M7.5 1.5 V5.5 H11.5" fill="none" stroke="#444" stroke-width="1.1" stroke-linejoin="round"/></svg><div class="a" style="left:64px;top:4px;font-size:13.5px;line-height:16px;color:#5f5f5f;white-space:nowrap">000024_result.json</div></div>
<div class="a" style="left:0;top:980px;width:398px;height:22px"><svg class="a" style="left:44px;top:4px" width="13" height="15" viewBox="0 0 13 15"><path d="M1.5 1.5 H8 L11.5 5 V13.5 H1.5 Z M7.5 1.5 V5.5 H11.5" fill="none" stroke="#444" stroke-width="1.1" stroke-linejoin="round"/></svg><div class="a" style="left:64px;top:4px;font-size:13.5px;line-height:16px;color:#5f5f5f;white-space:nowrap">000024_result.png</div></div>
<div class="a" style="left:0;top:1002px;width:398px;height:22px"><svg class="a" style="left:44px;top:4px" width="13" height="15" viewBox="0 0 13 15"><path d="M1.5 1.5 H8 L11.5 5 V13.5 H1.5 Z M7.5 1.5 V5.5 H11.5" fill="none" stroke="#444" stroke-width="1.1" stroke-linejoin="round"/></svg><div class="a" style="left:64px;top:4px;font-size:13.5px;line-height:16px;color:#5f5f5f;white-space:nowrap">000025_result.json</div></div>
<div class="a" style="left:0;top:1024px;width:398px;height:22px"><svg class="a" style="left:44px;top:4px" width="13" height="15" viewBox="0 0 13 15"><path d="M1.5 1.5 H8 L11.5 5 V13.5 H1.5 Z M7.5 1.5 V5.5 H11.5" fill="none" stroke="#444" stroke-width="1.1" stroke-linejoin="round"/></svg><div class="a" style="left:64px;top:4px;font-size:13.5px;line-height:16px;color:#5f5f5f;white-space:nowrap">000025_result.png</div></div>
<div class="a" style="left:0;top:1046px;width:398px;height:22px"><svg class="a" style="left:44px;top:4px" width="13" height="15" viewBox="0 0 13 15"><path d="M1.5 1.5 H8 L11.5 5 V13.5 H1.5 Z M7.5 1.5 V5.5 H11.5" fill="none" stroke="#444" stroke-width="1.1" stroke-linejoin="round"/></svg><div class="a" style="left:64px;top:4px;font-size:13.5px;line-height:16px;color:#5f5f5f;white-space:nowrap">000026_result.json</div></div>
<div class="a" style="left:0;top:1068px;width:398px;height:22px"><svg class="a" style="left:44px;top:4px" width="13" height="15" viewBox="0 0 13 15"><path d="M1.5 1.5 H8 L11.5 5 V13.5 H1.5 Z M7.5 1.5 V5.5 H11.5" fill="none" stroke="#444" stroke-width="1.1" stroke-linejoin="round"/></svg><div class="a" style="left:64px;top:4px;font-size:13.5px;line-height:16px;color:#5f5f5f;white-space:nowrap">000026_result.png</div></div>
<div class="a" style="left:0;top:1090px;width:398px;height:22px"><svg class="a" style="left:44px;top:4px" width="13" height="15" viewBox="0 0 13 15"><path d="M1.5 1.5 H8 L11.5 5 V13.5 H1.5 Z M7.5 1.5 V5.5 H11.5" fill="none" stroke="#444" stroke-width="1.1" stroke-linejoin="round"/></svg><div class="a" style="left:64px;top:4px;font-size:13.5px;line-height:16px;color:#5f5f5f;white-space:nowrap">000027_result.json</div></div>
<div class="a" style="left:0;top:1112px;width:398px;height:22px"><svg class="a" style="left:44px;top:4px" width="13" height="15" viewBox="0 0 13 15"><path d="M1.5 1.5 H8 L11.5 5 V13.5 H1.5 Z M7.5 1.5 V5.5 H11.5" fill="none" stroke="#444" stroke-width="1.1" stroke-linejoin="round"/></svg><div class="a" style="left:64px;top:4px;font-size:13.5px;line-height:16px;color:#5f5f5f;white-space:nowrap">000027_result.png</div></div>
</div>
<div class="a" style="left:48px;top:246px;width:398px;height:22px;background:#fce9f0;box-shadow:0 2px 3px rgba(120,60,90,0.12)"><svg class="a" style="left:17px;top:5px" width="12" height="12" viewBox="0 0 12 12"><path d="M1.5 4 L6 8.5 L10.5 4" fill="none" stroke="#4a1fa8" stroke-width="1.1"/></svg><svg class="a" style="left:33px;top:4px" width="17" height="15" viewBox="0 0 17 15"><path d="M1.5 13 V2 H6 L7.5 3.5 H13 V6 M1.5 13 L4 6 H15.5 L13 13 Z" fill="none" stroke="#444" stroke-width="1.1" stroke-linejoin="round"/></svg><div class="a" style="left:56px;top:4px;font-size:13.5px;line-height:16px;color:#5f5f5f">ocr_results</div></div>
<div class="a" style="left:48px;top:1372px;width:399px;height:22px;background:#f2b4cc"><svg class="a" style="left:5px;top:5px" width="12" height="12" viewBox="0 0 12 12"><path d="M4 1.5 L8.5 6 L4 10.5" fill="none" stroke="#4a1fa8" stroke-width="1.1"/></svg><div class="a" style="left:20px;top:4px;font-size:10.6px;line-height:14px;font-weight:bold;color:#3d2466;white-space:nowrap">OUTLINE</div></div>
<div class="a" style="left:48px;top:1394px;width:399px;height:22px;background:#f2b4cc"><svg class="a" style="left:5px;top:5px" width="12" height="12" viewBox="0 0 12 12"><path d="M4 1.5 L8.5 6 L4 10.5" fill="none" stroke="#4a1fa8" stroke-width="1.1"/></svg><div class="a" style="left:20px;top:4px;font-size:10.6px;line-height:14px;font-weight:bold;color:#3d2466;white-space:nowrap">TIMELINE</div></div>
<div class="a" style="left:48px;top:1416px;width:399px;height:22px;background:#f2b4cc"><svg class="a" style="left:5px;top:5px" width="12" height="12" viewBox="0 0 12 12"><path d="M4 1.5 L8.5 6 L4 10.5" fill="none" stroke="#4a1fa8" stroke-width="1.1"/></svg><div class="a" style="left:20px;top:4px;font-size:10.6px;line-height:14px;font-weight:bold;color:#3d2466;white-space:nowrap">METADATA</div></div>
<div class="a" style="left:446px;top:57px;width:1px;height:1381px;background:#f5c1d4"></div><div id="tabs" class="a"></div>
<div class="a" style="left:447px;top:57px;width:179px;height:35px;background:#fce9f0;border-right:1px solid #f7c9d9">
<svg class="a" style="left:12px;top:10px" width="13" height="15" viewBox="0 0 13 15"><path d="M1.5 1.5 H8 L11.5 5 V13.5 H1.5 Z M7.5 1.5 V5.5 H11.5" fill="none" stroke="#444" stroke-width="1.1" stroke-linejoin="round"/></svg>
<div class="a" style="left:32px;top:10px;font-size:14px;line-height:16px;color:#b8791a;white-space:nowrap">requirements.txt <span style="margin-left:3px">M</span></div>
</div>
<div class="a" style="left:625px;top:57px;width:134px;height:35px;background:#fce9f0;border-right:1px solid #f7c9d9">
<svg class="a" style="left:12px;top:10px" width="13" height="15" viewBox="0 0 13 15"><path d="M1.5 1.5 H8 L11.5 5 V13.5 H1.5 Z M7.5 1.5 V5.5 H11.5" fill="none" stroke="#444" stroke-width="1.1" stroke-linejoin="round"/></svg>
<div class="a" style="left:32px;top:10px;font-size:14px;line-height:16px;color:#8a7f86;white-space:nowrap">folderocr.py</div>
</div>
<div class="a" style="left:758px;top:57px;width:144px;height:35px;background:#fbdce6;border-right:1px solid #f7c9d9">
<svg class="a" style="left:12px;top:10px" width="13" height="15" viewBox="0 0 13 15"><path d="M1.5 1.5 H8 L11.5 5 V13.5 H1.5 Z M7.5 1.5 V5.5 H11.5" fill="none" stroke="#444" stroke-width="1.1" stroke-linejoin="round"/></svg>
<div class="a" style="left:32px;top:10px;font-size:14px;line-height:16px;color:#3a3a3a;white-space:nowrap">folderocr2.py</div>
<svg class="a" style="left:120px;top:11px" width="14" height="14" viewBox="0 0 14 14"><path d="M2.5 2.5 L10.5 10.5 M10.5 2.5 L2.5 10.5" stroke="#333" stroke-width="1.2"/></svg>
</div>
<div class="a" style="left:901px;top:57px;width:121px;height:35px;background:#fce9f0;border-right:1px solid #f7c9d9">
<svg class="a" style="left:12px;top:10px" width="13" height="15" viewBox="0 0 13 15"><path d="M1.5 1.5 H8 L11.5 5 V13.5 H1.5 Z M7.5 1.5 V5.5 H11.5" fill="none" stroke="#444" stroke-width="1.1" stroke-linejoin="round"/></svg>
<div class="a" style="left:32px;top:10px;font-size:14px;line-height:16px;color:#8a7f86;white-space:nowrap">ocrtest.py</div>
<div class="a" style="left:101px;top:14px;width:9px;height:9px;border-radius:5px;background:#666"></div>
</div>
<div class="a" style="left:1021px;top:57px;width:121px;height:35px;background:#fce9f0;border-right:1px solid #f7c9d9">
<svg class="a" style="left:12px;top:10px" width="13" height="15" viewBox="0 0 13 15"><path d="M1.5 1.5 H8 L11.5 5 V13.5 H1.5 Z M7.5 1.5 V5.5 H11.5" fill="none" stroke="#444" stroke-width="1.1" stroke-linejoin="round"/></svg>
<div class="a" style="left:32px;top:10px;font-size:14px;line-height:16px;color:#8a7f86;white-space:nowrap">OCR.yaml</div>
</div>
<svg class="a" style="left:2100px;top:57px" width="156" height="35" viewBox="2100 57 156 35">
<path d="M2111.5 69.5 L2121 75.5 L2111.5 81.5 Z" fill="none" stroke="#3a1a8a" stroke-width="1.2" stroke-linejoin="round"/>
<path d="M2128.5 73.5 L2132 77 L2135.5 73.5" fill="none" stroke="#5a2ab0" stroke-width="1"/>
<g fill="none" stroke="#333" stroke-width="1.2" stroke-linejoin="round">
<path d="M2150.5 73 V67.5 H2158.5 L2160.5 69.5 V73 M2150.5 79.5 H2147.5 V73 H2163.5 V79.5 H2160.5 M2150.5 76.5 H2160.5 V82.5 H2150.5 Z"/>
<path d="M2173.5 67.5 H2185 V70 M2180 82 H2173.5 V67.5"/><circle cx="2181.5" cy="75" r="4.5"/><path d="M2184.5 78.5 L2188 82.5"/>
</g>
<path d="M2201.5 68.5 H2214.5 V81.5 H2201.5 Z M2208 68.5 V81.5" fill="none" stroke="#3a1a8a" stroke-width="1.2"/>
<g fill="#3a1a8a"><circle cx="2228" cy="75" r="1.1"/><circle cx="2233" cy="75" r="1.1"/><circle cx="2238" cy="75" r="1.1"/></g>
</svg>
<div id="crumb" class="a"></div>
<div class="a" style="left:440px;top:92px;width:7px;height:22px;background:#f2b4cc"></div>
<div class="a" style="left:463px;top:96px;font-size:13.5px;line-height:16px;color:#8a4a8e;white-space:nowrap">py</div>
<svg class="a" style="left:480px;top:95px" width="12" height="16" viewBox="0 0 12 16"><path d="M3.5 4 L7.5 8 L3.5 12" fill="none" stroke="#8a4a8e" stroke-width="1"/></svg>
<svg class="a" style="left:496px;top:95px" width="13" height="15" viewBox="0 0 13 15"><path d="M1.5 1.5 H8 L11.5 5 V13.5 H1.5 Z M7.5 1.5 V5.5 H11.5" fill="none" stroke="#444" stroke-width="1.1" stroke-linejoin="round"/></svg>
<div class="a" style="left:515px;top:96px;font-size:13.8px;line-height:16px;color:#8a4a8e;white-space:nowrap">folderocr2.py</div>
<svg class="a" style="left:600px;top:95px" width="12" height="16" viewBox="0 0 12 16"><path d="M3.5 4 L7.5 8 L3.5 12" fill="none" stroke="#8a4a8e" stroke-width="1"/></svg>
<div class="a" style="left:612px;top:96px;font-size:13.5px;line-height:16px;color:#8a4a8e;white-space:nowrap">...</div>
<div id="code" class="a"></div>
<div class="a" style="left:447px;top:114px;width:1675px;height:767px;overflow:hidden">
<div class="a" style="left:73px;top:266px;width:1602px;height:20px;border-top:1px solid #e8e8e8;border-bottom:1px solid #e8e8e8"></div>
<div class="a" style="left:73px;top:6px;width:1px;height:20px;background:#d9d9d9"></div>
<div class="a" style="left:109px;top:6px;width:1px;height:20px;background:#d9d9d9"></div>
<div class="a mono" style="left:0;top:7px;width:48px;text-align:right;font-size:16.5px;line-height:20px;letter-spacing:-0.9px;color:#2d2680">36</div>
<div class="a mono" style="left:73px;top:4px;font-size:16.5px;line-height:20px;letter-spacing:-0.9px;color:#3b3b3b;white-space:pre">        <span style="color:#008000"># Use the global pipeline</span></div>
<div class="a" style="left:73px;top:26px;width:1px;height:20px;background:#d9d9d9"></div>
<div class="a" style="left:109px;top:26px;width:1px;height:20px;background:#d9d9d9"></div>
<div class="a mono" style="left:0;top:27px;width:48px;text-align:right;font-size:16.5px;line-height:20px;letter-spacing:-0.9px;color:#2d2680">37</div>
<div class="a mono" style="left:73px;top:27px;font-size:16.5px;line-height:20px;letter-spacing:-0.9px;color:#3b3b3b;white-space:pre">        output = global_pipeline.predict<span style="color:#0431fa">(</span>img<span style="color:#0431fa">)</span></div>
<div class="a" style="left:73px;top:46px;width:1px;height:20px;background:#d9d9d9"></div>
<div class="a" style="left:109px;top:46px;width:1px;height:20px;background:#d9d9d9"></div>
<div class="a mono" style="left:0;top:47px;width:48px;text-align:right;font-size:16.5px;line-height:20px;letter-spacing:-0.9px;color:#2d2680">38</div>
<div class="a mono" style="left:73px;top:47px;font-size:16.5px;line-height:20px;letter-spacing:-0.9px;color:#3b3b3b;white-space:pre"></div>
<div class="a" style="left:73px;top:66px;width:1px;height:20px;background:#d9d9d9"></div>
<div class="a" style="left:109px;top:66px;width:1px;height:20px;background:#d9d9d9"></div>
<div class="a mono" style="left:0;top:67px;width:48px;text-align:right;font-size:16.5px;line-height:20px;letter-spacing:-0.9px;color:#2d2680">39</div>
<div class="a mono" style="left:73px;top:67px;font-size:16.5px;line-height:20px;letter-spacing:-0.9px;color:#3b3b3b;white-space:pre">        <span style="color:#af00db">for</span> res <span style="color:#af00db">in</span> output:</div>
<div class="a" style="left:73px;top:86px;width:1px;height:20px;background:#d9d9d9"></div>
<div class="a" style="left:109px;top:86px;width:1px;height:20px;background:#d9d9d9"></div>
<div class="a" style="left:145px;top:86px;width:1px;height:20px;background:#d9d9d9"></div>
<div class="a mono" style="left:0;top:87px;width:48px;text-align:right;font-size:16.5px;line-height:20px;letter-spacing:-0.9px;color:#2d2680">40</div>
<div class="a mono" style="left:73px;top:87px;font-size:16.5px;line-height:20px;letter-spacing:-0.9px;color:#3b3b3b;white-space:pre">            <span style="color:#008000"># res.print()  # Uncomment if you want to see per-image results</span></div>
<div class="a" style="left:73px;top:106px;width:1px;height:20px;background:#d9d9d9"></div>
<div class="a" style="left:109px;top:106px;width:1px;height:20px;background:#d9d9d9"></div>
<div class="a" style="left:145px;top:106px;width:1px;height:20px;background:#d9d9d9"></div>
<div class="a mono" style="left:0;top:107px;width:48px;text-align:right;font-size:16.5px;line-height:20px;letter-spacing:-0.9px;color:#2d2680">41</div>
<div class="a mono" style="left:73px;top:107px;font-size:16.5px;line-height:20px;letter-spacing:-0.9px;color:#3b3b3b;white-space:pre">            res.save_to_img<span style="color:#0431fa">(</span>os.path.join<span style="color:#319331">(</span>output_dir, <span style="color:#0000ff">f</span><span style="color:#5b3030">&quot;</span><span style="color:#7b3814">{</span><span style="color:#1f377f">base_name</span><span style="color:#7b3814">}</span><span style="color:#a31515">_result</span><span style="color:#7b3814">{</span><span style="color:#1f377f">ext</span><span style="color:#7b3814">}</span><span style="color:#5b3030">&quot;</span><span style="color:#319331">)</span><span style="color:#0431fa">)</span></div>
<div class="a" style="left:73px;top:126px;width:1px;height:20px;background:#d9d9d9"></div>
<div class="a" style="left:109px;top:126px;width:1px;height:20px;background:#d9d9d9"></div>
<div class="a" style="left:145px;top:126px;width:1px;height:20px;background:#d9d9d9"></div>
<div class="a mono" style="left:0;top:127px;width:48px;text-align:right;font-size:16.5px;line-height:20px;letter-spacing:-0.9px;color:#2d2680">42</div>
<div class="a mono" style="left:73px;top:127px;font-size:16.5px;line-height:20px;letter-spacing:-0.9px;color:#3b3b3b;white-space:pre">            res.save_to_json<span style="color:#0431fa">(</span></div>
<div class="a" style="left:73px;top:146px;width:1px;height:20px;background:#d9d9d9"></div>
<div class="a" style="left:109px;top:146px;width:1px;height:20px;background:#d9d9d9"></div>
<div class="a" style="left:145px;top:146px;width:1px;height:20px;background:#d9d9d9"></div>
<div class="a" style="left:181px;top:146px;width:1px;height:20px;background:#d9d9d9"></div>
<div class="a mono" style="left:0;top:147px;width:48px;text-align:right;font-size:16.5px;line-height:20px;letter-spacing:-0.9px;color:#2d2680">43</div>
<div class="a mono" style="left:73px;top:147px;font-size:16.5px;line-height:20px;letter-spacing:-0.9px;color:#3b3b3b;white-space:pre">                <span style="color:#001080">save_path</span>=os.path.join<span style="color:#319331">(</span>output_dir, <span style="color:#0000ff">f</span><span style="color:#5b3030">&quot;</span><span style="color:#7b3814">{</span><span style="color:#1f377f">base_name</span><span style="color:#7b3814">}</span><span style="color:#a31515">_result.json</span><span style="color:#5b3030">&quot;</span><span style="color:#319331">)</span>,</div>
<div class="a" style="left:73px;top:166px;width:1px;height:20px;background:#d9d9d9"></div>
<div class="a" style="left:109px;top:166px;width:1px;height:20px;background:#d9d9d9"></div>
<div class="a" style="left:145px;top:166px;width:1px;height:20px;background:#d9d9d9"></div>
<div class="a" style="left:181px;top:166px;width:1px;height:20px;background:#d9d9d9"></div>
<div class="a mono" style="left:0;top:167px;width:48px;text-align:right;font-size:16.5px;line-height:20px;letter-spacing:-0.9px;color:#2d2680">44</div>
<div class="a mono" style="left:73px;top:167px;font-size:16.5px;line-height:20px;letter-spacing:-0.9px;color:#3b3b3b;white-space:pre">                <span style="color:#001080">indent</span>=<span style="color:#098658">4</span>,</div>
<div class="a" style="left:73px;top:186px;width:1px;height:20px;background:#d9d9d9"></div>
<div class="a" style="left:109px;top:186px;width:1px;height:20px;background:#d9d9d9"></div>
<div class="a" style="left:145px;top:186px;width:1px;height:20px;background:#d9d9d9"></div>
<div class="a" style="left:181px;top:186px;width:1px;height:20px;background:#d9d9d9"></div>
<div class="a mono" style="left:0;top:187px;width:48px;text-align:right;font-size:16.5px;line-height:20px;letter-spacing:-0.9px;color:#2d2680">45</div>
<div class="a mono" style="left:73px;top:187px;font-size:16.5px;line-height:20px;letter-spacing:-0.9px;color:#3b3b3b;white-space:pre">                <span style="color:#001080">ensure_ascii</span>=<span style="color:#0000ff">False</span></div>
<div class="a" style="left:73px;top:206px;width:1px;height:20px;background:#d9d9d9"></div>
<div class="a" style="left:109px;top:206px;width:1px;height:20px;background:#d9d9d9"></div>
<div class="a" style="left:145px;top:206px;width:1px;height:20px;background:#d9d9d9"></div>
<div class="a mono" style="left:0;top:207px;width:48px;text-align:right;font-size:16.5px;line-height:20px;letter-spacing:-0.9px;color:#2d2680">46</div>
<div class="a mono" style="left:73px;top:207px;font-size:16.5px;line-height:20px;letter-spacing:-0.9px;color:#3b3b3b;white-space:pre">            <span style="color:#0431fa">)</span></div>
<div class="a" style="left:73px;top:226px;width:1px;height:20px;background:#d9d9d9"></div>
<div class="a mono" style="left:0;top:227px;width:48px;text-align:right;font-size:16.5px;line-height:20px;letter-spacing:-0.9px;color:#2d2680">47</div>
<div class="a mono" style="left:73px;top:227px;font-size:16.5px;line-height:20px;letter-spacing:-0.9px;color:#3b3b3b;white-space:pre">    <span style="color:#af00db">except</span> <span style="color:#267f99">Exception</span> <span style="color:#af00db">as</span> e:</div>
<div class="a" style="left:73px;top:246px;width:1px;height:20px;background:#d9d9d9"></div>
<div class="a" style="left:109px;top:246px;width:1px;height:20px;background:#d9d9d9"></div>
<div class="a mono" style="left:0;top:247px;width:48px;text-align:right;font-size:16.5px;line-height:20px;letter-spacing:-0.9px;color:#2d2680">48</div>
<div class="a mono" style="left:73px;top:247px;font-size:16.5px;line-height:20px;letter-spacing:-0.9px;color:#3b3b3b;white-space:pre">        <span style="color:#795e26">print</span><span style="color:#0431fa">(</span><span style="color:#0000ff">f</span><span style="color:#a31515">&quot;Error processing </span><span style="color:#319331">{</span>image_path<span style="color:#319331">}</span><span style="color:#a31515">: </span><span style="color:#319331">{</span>e<span style="color:#319331">}</span><span style="color:#a31515">&quot;</span><span style="color:#0431fa">)</span></div>
<div class="a" style="left:73px;top:266px;width:1px;height:20px;background:#d9d9d9"></div>
<div class="a mono" style="left:0;top:267px;width:48px;text-align:right;font-size:16.5px;line-height:20px;letter-spacing:-0.9px;color:#2d2680">49</div>
<div class="a mono" style="left:73px;top:267px;font-size:16.5px;line-height:20px;letter-spacing:-0.9px;color:#3b3b3b;white-space:pre">    <span style="color:#008000"># return  # No need to return anything here.</span></div>
<div class="a mono" style="left:0;top:287px;width:48px;text-align:right;font-size:16.5px;line-height:20px;letter-spacing:-0.9px;color:#2d2680">50</div>
<div class="a mono" style="left:73px;top:287px;font-size:16.5px;line-height:20px;letter-spacing:-0.9px;color:#3b3b3b;white-space:pre"></div>
<div class="a mono" style="left:0;top:307px;width:48px;text-align:right;font-size:16.5px;line-height:20px;letter-spacing:-0.9px;color:#2d2680">51</div>
<div class="a mono" style="left:73px;top:307px;font-size:16.5px;line-height:20px;letter-spacing:-0.9px;color:#3b3b3b;white-space:pre"></div>
<div class="a mono" style="left:0;top:327px;width:48px;text-align:right;font-size:16.5px;line-height:20px;letter-spacing:-0.9px;color:#2d2680">52</div>
<div class="a mono" style="left:73px;top:327px;font-size:16.5px;line-height:20px;letter-spacing:-0.9px;color:#3b3b3b;white-space:pre"><span style="color:#af00db">if</span> __name__ <span style="color:#1f377f">==</span> <span style="color:#a31515">&#x27;__main__&#x27;</span>:</div>
<div class="a" style="left:73px;top:346px;width:1px;height:20px;background:#d9d9d9"></div>
<div class="a mono" style="left:0;top:347px;width:48px;text-align:right;font-size:16.5px;line-height:20px;letter-spacing:-0.9px;color:#2d2680">53</div>
<div class="a mono" style="left:73px;top:347px;font-size:16.5px;line-height:20px;letter-spacing:-0.9px;color:#3b3b3b;white-space:pre">    image_paths = <span style="color:#0431fa">[</span></div>
<div class="a" style="left:73px;top:366px;width:1px;height:20px;background:#d9d9d9"></div>
<div class="a" style="left:109px;top:366px;width:1px;height:20px;background:#d9d9d9"></div>
<div class="a mono" style="left:0;top:367px;width:48px;text-align:right;font-size:16.5px;line-height:20px;letter-spacing:-0.9px;color:#2d2680">54</div>
<div class="a mono" style="left:73px;top:367px;font-size:16.5px;line-height:20px;letter-spacing:-0.9px;color:#3b3b3b;white-space:pre">        os.path.join<span style="color:#319331">(</span>image_dir, filename<span style="color:#319331">)</span></div>
<div class="a" style="left:73px;top:386px;width:1px;height:20px;background:#d9d9d9"></div>
<div class="a" style="left:109px;top:386px;width:1px;height:20px;background:#d9d9d9"></div>
<div class="a mono" style="left:0;top:387px;width:48px;text-align:right;font-size:16.5px;line-height:20px;letter-spacing:-0.9px;color:#2d2680">55</div>
<div class="a mono" style="left:73px;top:387px;font-size:16.5px;line-height:20px;letter-spacing:-0.9px;color:#3b3b3b;white-space:pre">        <span style="color:#af00db">for</span> filename <span style="color:#af00db">in</span> os.listdir<span style="color:#319331">(</span>image_dir<span style="color:#319331">)</span></div>
<div class="a" style="left:73px;top:406px;width:1px;height:20px;background:#d9d9d9"></div>
<div class="a" style="left:109px;top:406px;width:1px;height:20px;background:#d9d9d9"></div>
<div class="a mono" style="left:0;top:407px;width:48px;text-align:right;font-size:16.5px;line-height:20px;letter-spacing:-0.9px;color:#2d2680">56</div>
<div class="a mono" style="left:73px;top:407px;font-size:16.5px;line-height:20px;letter-spacing:-0.9px;color:#3b3b3b;white-space:pre">        <span style="color:#af00db">if</span> filename.lower<span style="color:#319331">()</span>.endswith<span style="color:#319331">(</span><span style="color:#7b3814">(</span><span style="color:#a31515">&quot;.jpg&quot;</span>, <span style="color:#a31515">&quot;.jpeg&quot;</span>, <span style="color:#a31515">&quot;.png&quot;</span>, <span style="color:#a31515">&quot;.bmp&quot;</span><span style="color:#7b3814">)</span><span style="color:#319331">)</span></div>
<div class="a" style="left:73px;top:426px;width:1px;height:20px;background:#d9d9d9"></div>
<div class="a mono" style="left:0;top:427px;width:48px;text-align:right;font-size:16.5px;line-height:20px;letter-spacing:-0.9px;color:#2d2680">57</div>
<div class="a mono" style="left:73px;top:427px;font-size:16.5px;line-height:20px;letter-spacing:-0.9px;color:#3b3b3b;white-space:pre">    <span style="color:#0431fa">]</span></div>
<div class="a" style="left:73px;top:446px;width:1px;height:20px;background:#d9d9d9"></div>
<div class="a mono" style="left:0;top:447px;width:48px;text-align:right;font-size:16.5px;line-height:20px;letter-spacing:-0.9px;color:#2d2680">58</div>
<div class="a mono" style="left:73px;top:447px;font-size:16.5px;line-height:20px;letter-spacing:-0.9px;color:#3b3b3b;white-space:pre"></div>
<div class="a" style="left:73px;top:466px;width:1px;height:20px;background:#d9d9d9"></div>
<div class="a mono" style="left:0;top:467px;width:48px;text-align:right;font-size:16.5px;line-height:20px;letter-spacing:-0.9px;color:#2d2680">59</div>
<div class="a mono" style="left:73px;top:467px;font-size:16.5px;line-height:20px;letter-spacing:-0.9px;color:#3b3b3b;white-space:pre">    start_time = time.time<span style="color:#0431fa">()</span></div>
<div class="a" style="left:73px;top:486px;width:1px;height:20px;background:#d9d9d9"></div>
<div class="a mono" style="left:0;top:487px;width:48px;text-align:right;font-size:16.5px;line-height:20px;letter-spacing:-0.9px;color:#2d2680">60</div>
<div class="a mono" style="left:73px;top:487px;font-size:16.5px;line-height:20px;letter-spacing:-0.9px;color:#3b3b3b;white-space:pre"></div>
<div class="a" style="left:73px;top:506px;width:1px;height:20px;background:#d9d9d9"></div>
<div class="a mono" style="left:0;top:507px;width:48px;text-align:right;font-size:16.5px;line-height:20px;letter-spacing:-0.9px;color:#2d2680">61</div>
<div class="a mono" style="left:73px;top:507px;font-size:16.5px;line-height:20px;letter-spacing:-0.9px;color:#3b3b3b;white-space:pre">    <span style="color:#af00db">with</span> ProcessPoolExecutor<span style="color:#0431fa">(</span><span style="color:#001080">max_workers</span>= <span style="color:#098658">8</span>,</div>
<div class="a" style="left:73px;top:526px;width:1px;height:20px;background:#d9d9d9"></div>
<div class="a" style="left:109px;top:526px;width:1px;height:20px;background:#d9d9d9"></div>
<div class="a" style="left:145px;top:526px;width:1px;height:20px;background:#d9d9d9"></div>
<div class="a" style="left:181px;top:526px;width:1px;height:20px;background:#d9d9d9"></div>
<div class="a" style="left:217px;top:526px;width:1px;height:20px;background:#d9d9d9"></div>
<div class="a" style="left:253px;top:526px;width:1px;height:20px;background:#d9d9d9"></div>
<div class="a" style="left:289px;top:526px;width:1px;height:20px;background:#d9d9d9"></div>
<div class="a" style="left:325px;top:526px;width:1px;height:20px;background:#d9d9d9"></div>
<div class="a mono" style="left:0;top:527px;width:48px;text-align:right;font-size:16.5px;line-height:20px;letter-spacing:-0.9px;color:#2d2680">62</div>
<div class="a mono" style="left:73px;top:527px;font-size:16.5px;line-height:20px;letter-spacing:-0.9px;color:#3b3b3b;white-space:pre">                             <span style="color:#001080">initializer</span>=init_worker,</div>
<div class="a" style="left:73px;top:546px;width:1px;height:20px;background:#d9d9d9"></div>
<div class="a" style="left:109px;top:546px;width:1px;height:20px;background:#d9d9d9"></div>
<div class="a" style="left:145px;top:546px;width:1px;height:20px;background:#d9d9d9"></div>
<div class="a" style="left:181px;top:546px;width:1px;height:20px;background:#d9d9d9"></div>
<div class="a" style="left:217px;top:546px;width:1px;height:20px;background:#d9d9d9"></div>
<div class="a" style="left:253px;top:546px;width:1px;height:20px;background:#d9d9d9"></div>
<div class="a" style="left:289px;top:546px;width:1px;height:20px;background:#d9d9d9"></div>
<div class="a" style="left:325px;top:546px;width:1px;height:20px;background:#d9d9d9"></div>
<div class="a mono" style="left:0;top:547px;width:48px;text-align:right;font-size:16.5px;line-height:20px;letter-spacing:-0.9px;color:#2d2680">63</div>
<div class="a mono" style="left:73px;top:547px;font-size:16.5px;line-height:20px;letter-spacing:-0.9px;color:#3b3b3b;white-space:pre">                             <span style="color:#001080">initargs</span>=<span style="color:#319331">(</span>config_path,<span style="color:#319331">)</span><span style="color:#0431fa">)</span> <span style="color:#af00db">as</span> executor:  <span style="color:#008000"># Pass config_path</span></div>
<div class="a" style="left:73px;top:566px;width:1px;height:20px;background:#d9d9d9"></div>
<div class="a" style="left:109px;top:566px;width:1px;height:20px;background:#d9d9d9"></div>
<div class="a mono" style="left:0;top:567px;width:48px;text-align:right;font-size:16.5px;line-height:20px;letter-spacing:-0.9px;color:#2d2680">64</div>
<div class="a mono" style="left:73px;top:567px;font-size:16.5px;line-height:20px;letter-spacing:-0.9px;color:#3b3b3b;white-space:pre">        <span style="color:#af00db">for</span> _ <span style="color:#af00db">in</span> executor.map<span style="color:#0431fa">(</span>process_image, image_paths<span style="color:#0431fa">)</span>:</div>
<div class="a" style="left:73px;top:586px;width:1px;height:20px;background:#d9d9d9"></div>
<div class="a" style="left:109px;top:586px;width:1px;height:20px;background:#d9d9d9"></div>
<div class="a" style="left:145px;top:586px;width:1px;height:20px;background:#d9d9d9"></div>
<div class="a mono" style="left:0;top:587px;width:48px;text-align:right;font-size:16.5px;line-height:20px;letter-spacing:-0.9px;color:#2d2680">65</div>
<div class="a mono" style="left:73px;top:587px;font-size:16.5px;line-height:20px;letter-spacing:-0.9px;color:#3b3b3b;white-space:pre">            <span style="color:#af00db">pass</span></div>
<div class="a" style="left:73px;top:606px;width:1px;height:20px;background:#d9d9d9"></div>
<div class="a mono" style="left:0;top:607px;width:48px;text-align:right;font-size:16.5px;line-height:20px;letter-spacing:-0.9px;color:#2d2680">66</div>
<div class="a mono" style="left:73px;top:607px;font-size:16.5px;line-height:20px;letter-spacing:-0.9px;color:#3b3b3b;white-space:pre"></div>
<div class="a" style="left:73px;top:626px;width:1px;height:20px;background:#d9d9d9"></div>
<div class="a mono" style="left:0;top:627px;width:48px;text-align:right;font-size:16.5px;line-height:20px;letter-spacing:-0.9px;color:#2d2680">67</div>
<div class="a mono" style="left:73px;top:627px;font-size:16.5px;line-height:20px;letter-spacing:-0.9px;color:#3b3b3b;white-space:pre">    end_time = time.time<span style="color:#0431fa">()</span></div>
<div class="a" style="left:73px;top:646px;width:1px;height:20px;background:#d9d9d9"></div>
<div class="a mono" style="left:0;top:647px;width:48px;text-align:right;font-size:16.5px;line-height:20px;letter-spacing:-0.9px;color:#2d2680">68</div>
<div class="a mono" style="left:73px;top:647px;font-size:16.5px;line-height:20px;letter-spacing:-0.9px;color:#3b3b3b;white-space:pre">    total_time = end_time - start_time</div>
<div class="a" style="left:73px;top:666px;width:1px;height:20px;background:#d9d9d9"></div>
<div class="a mono" style="left:0;top:667px;width:48px;text-align:right;font-size:16.5px;line-height:20px;letter-spacing:-0.9px;color:#2d2680">69</div>
<div class="a mono" style="left:73px;top:667px;font-size:16.5px;line-height:20px;letter-spacing:-0.9px;color:#3b3b3b;white-space:pre"></div>
<div class="a" style="left:73px;top:686px;width:1px;height:20px;background:#d9d9d9"></div>
<div class="a mono" style="left:0;top:687px;width:48px;text-align:right;font-size:16.5px;line-height:20px;letter-spacing:-0.9px;color:#2d2680">70</div>
<div class="a mono" style="left:73px;top:687px;font-size:16.5px;line-height:20px;letter-spacing:-0.9px;color:#3b3b3b;white-space:pre">    <span style="color:#795e26">print</span><span style="color:#0431fa">(</span><span style="color:#0000ff">f</span><span style="color:#a31515">&quot;OCR results saved to: </span><span style="color:#319331">{</span>output_dir<span style="color:#319331">}</span><span style="color:#a31515">&quot;</span><span style="color:#0431fa">)</span></div>
<div class="a" style="left:73px;top:706px;width:1px;height:20px;background:#d9d9d9"></div>
<div class="a mono" style="left:0;top:707px;width:48px;text-align:right;font-size:16.5px;line-height:20px;letter-spacing:-0.9px;color:#2d2680">71</div>
<div class="a mono" style="left:73px;top:707px;font-size:16.5px;line-height:20px;letter-spacing:-0.9px;color:#3b3b3b;white-space:pre">    <span style="color:#795e26">print</span><span style="color:#0431fa">(</span><span style="color:#0000ff">f</span><span style="color:#a31515">&quot;Total processing time: </span><span style="color:#319331">{</span>total_time<span style="color:#0000ff">:.2f</span><span style="color:#319331">}</span><span style="color:#a31515"> seconds&quot;</span><span style="color:#0431fa">)</span></div>
<div class="a" style="left:73px;top:726px;width:1px;height:20px;background:#d9d9d9"></div>
<div class="a mono" style="left:0;top:727px;width:48px;text-align:right;font-size:16.5px;line-height:20px;letter-spacing:-0.9px;color:#2d2680">72</div>
<div class="a mono" style="left:73px;top:727px;font-size:16.5px;line-height:20px;letter-spacing:-0.9px;color:#3b3b3b;white-space:pre">    <span style="color:#af00db">if</span> image_paths:</div>
<div class="a" style="left:73px;top:746px;width:1px;height:20px;background:#d9d9d9"></div>
<div class="a" style="left:109px;top:746px;width:1px;height:20px;background:#d9d9d9"></div>
<div class="a mono" style="left:0;top:747px;width:48px;text-align:right;font-size:16.5px;line-height:20px;letter-spacing:-0.9px;color:#2d2680">73</div>
<div class="a mono" style="left:73px;top:747px;font-size:16.5px;line-height:20px;letter-spacing:-0.9px;color:#3b3b3b;white-space:pre">        <span style="color:#795e26">print</span><span style="color:#0431fa">(</span><span style="color:#0000ff">f</span><span style="color:#a31515">&quot;Average time per image: </span><span style="color:#319331">{</span>total_time / <span style="color:#795e26">len</span><span style="color:#7b3814">(</span>image_paths<span style="color:#7b3814">)</span><span style="color:#0000ff">:.3f</span><span style="color:#319331">}</span><span style="color:#a31515"> seconds&quot;</span><span style="color:#0431fa">)</span></div>
<div class="a" style="left:0;top:0;width:1675px;height:20px;background:#fff;box-shadow:0 2px 2px rgba(0,0,0,0.13)">
<div class="a mono" style="left:0;top:1px;width:48px;text-align:right;font-size:16.5px;line-height:20px;letter-spacing:-0.9px;color:#2d2680">26</div>
<div class="a mono" style="left:73px;top:1px;font-size:16.5px;line-height:20px;letter-spacing:-0.9px;color:#3b3b3b;white-space:pre"><span style="color:#0000ff">def</span> <span style="color:#795e26">process_image</span><span style="color:#0431fa">(</span><span style="color:#001080">image_path</span><span style="color:#0431fa">)</span>:</div>
</div>
</div><svg class="a" style="left:2122px;top:114px" width="134" height="767" viewBox="2122 114 134 767">
<rect x="2122" y="182" width="120" height="76" fill="#000" fill-opacity="0.14"/>
<g fill-opacity="0.5"><rect x="2130" y="114" width="6" height="1.3" fill="#af00db"/><rect x="2137" y="114" width="2" height="1.3" fill="#3b3b3b"/><rect x="2130" y="116" width="6" height="1.3" fill="#af00db"/><rect x="2137" y="116" width="3" height="1.3" fill="#3b3b3b"/><rect x="2130" y="118" width="6" height="1.3" fill="#af00db"/><rect x="2137" y="118" width="4" height="1.3" fill="#3b3b3b"/><rect x="2130" y="120" width="6" height="1.3" fill="#af00db"/><rect x="2137" y="120" width="7" height="1.3" fill="#3b3b3b"/><rect x="2145" y="120" width="2" height="1.3" fill="#af00db"/><rect x="2148" y="120" width="3" height="1.3" fill="#3b3b3b"/><rect x="2130" y="122" width="4" height="1.3" fill="#af00db"/><rect x="2135" y="122" width="18" height="1.3" fill="#3b3b3b"/><rect x="2154" y="122" width="6" height="1.3" fill="#af00db"/><rect x="2161" y="122" width="19" height="1.3" fill="#3b3b3b"/><rect x="2130" y="126" width="1" height="1.3" fill="#008000"/><rect x="2132" y="126" width="3" height="1.3" fill="#008000"/><rect x="2136" y="126" width="13" height="1.3" fill="#008000"/><rect x="2150" y="126" width="3" height="1.3" fill="#008000"/><rect x="2154" y="126" width="5" height="1.3" fill="#008000"/><rect x="2160" y="126" width="5" height="1.3" fill="#008000"/><rect x="2166" y="126" width="7" height="1.3" fill="#008000"/><rect x="2174" y="126" width="3" height="1.3" fill="#008000"/><rect x="2178" y="126" width="9" height="1.3" fill="#008000"/><rect x="2130" y="128" width="11" height="1.3" fill="#3b3b3b"/><rect x="2142" y="128" width="1" height="1.3" fill="#3b3b3b"/><rect x="2144" y="128" width="46" height="1.3" fill="#a31515"/><rect x="2130" y="130" width="9" height="1.3" fill="#3b3b3b"/><rect x="2140" y="130" width="1" height="1.3" fill="#3b3b3b"/><rect x="2142" y="130" width="43" height="1.3" fill="#a31515"/><rect x="2130" y="132" width="10" height="1.3" fill="#3b3b3b"/><rect x="2141" y="132" width="1" height="1.3" fill="#3b3b3b"/><rect x="2143" y="132" width="15" height="1.3" fill="#a31515"/><rect x="2130" y="134" width="11" height="1.3" fill="#3b3b3b"/><rect x="2141" y="134" width="1" height="1.3" fill="#0431fa"/><rect x="2142" y="134" width="11" height="1.3" fill="#3b3b3b"/><rect x="2154" y="134" width="8" height="1.3" fill="#001080"/><rect x="2162" y="134" width="1" height="1.3" fill="#3b3b3b"/><rect x="2163" y="134" width="4" height="1.3" fill="#0000ff"/><rect x="2167" y="134" width="1" height="1.3" fill="#0431fa"/><rect x="2130" y="138" width="1" height="1.3" fill="#008000"/><rect x="2132" y="138" width="3" height="1.3" fill="#008000"/><rect x="2136" y="138" width="6" height="1.3" fill="#008000"/><rect x="2143" y="138" width="8" height="1.3" fill="#008000"/><rect x="2152" y="138" width="7" height="1.3" fill="#008000"/><rect x="2160" y="138" width="3" height="1.3" fill="#008000"/><rect x="2164" y="138" width="8" height="1.3" fill="#008000"/><rect x="2173" y="138" width="3" height="1.3" fill="#008000"/><rect x="2130" y="140" width="1" height="1.3" fill="#008000"/><rect x="2132" y="140" width="4" height="1.3" fill="#008000"/><rect x="2137" y="140" width="4" height="1.3" fill="#008000"/><rect x="2142" y="140" width="4" height="1.3" fill="#008000"/><rect x="2147" y="140" width="3" height="1.3" fill="#008000"/><rect x="2151" y="140" width="8" height="1.3" fill="#008000"/><rect x="2160" y="140" width="3" height="1.3" fill="#008000"/><rect x="2164" y="140" width="4" height="1.3" fill="#008000"/><rect x="2169" y="140" width="8" height="1.3" fill="#008000"/><rect x="2179" y="140" width="4" height="1.3" fill="#008000"/><rect x="2184" y="140" width="8" height="1.3" fill="#008000"/><rect x="2130" y="142" width="15" height="1.3" fill="#3b3b3b"/><rect x="2146" y="142" width="1" height="1.3" fill="#3b3b3b"/><rect x="2148" y="142" width="4" height="1.3" fill="#0000ff"/><rect x="2130" y="146" width="3" height="1.3" fill="#0000ff"/><rect x="2134" y="146" width="11" height="1.3" fill="#795e26"/><rect x="2145" y="146" width="1" height="1.3" fill="#0431fa"/><rect x="2146" y="146" width="11" height="1.3" fill="#001080"/><rect x="2157" y="146" width="1" height="1.3" fill="#0431fa"/><rect x="2158" y="146" width="1" height="1.3" fill="#3b3b3b"/><rect x="2134" y="148" width="3" height="1.3" fill="#a31515"/><rect x="2134" y="150" width="11" height="1.3" fill="#a31515"/><rect x="2146" y="150" width="3" height="1.3" fill="#a31515"/><rect x="2150" y="150" width="7" height="1.3" fill="#a31515"/><rect x="2158" y="150" width="8" height="1.3" fill="#a31515"/><rect x="2167" y="150" width="6" height="1.3" fill="#a31515"/><rect x="2174" y="150" width="4" height="1.3" fill="#a31515"/><rect x="2179" y="150" width="8" height="1.3" fill="#a31515"/><rect x="2134" y="152" width="4" height="1.3" fill="#a31515"/><rect x="2139" y="152" width="8" height="1.3" fill="#a31515"/><rect x="2148" y="152" width="4" height="1.3" fill="#a31515"/><rect x="2153" y="152" width="2" height="1.3" fill="#a31515"/><rect x="2156" y="152" width="6" height="1.3" fill="#a31515"/><rect x="2163" y="152" width="4" height="1.3" fill="#a31515"/><rect x="2168" y="152" width="3" height="1.3" fill="#a31515"/><rect x="2172" y="152" width="7" height="1.3" fill="#a31515"/><rect x="2180" y="152" width="4" height="1.3" fill="#a31515"/><rect x="2185" y="152" width="3" height="1.3" fill="#a31515"/><rect x="2189" y="152" width="4" height="1.3" fill="#a31515"/><rect x="2194" y="152" width="7" height="1.3" fill="#a31515"/><rect x="2134" y="154" width="3" height="1.3" fill="#a31515"/><rect x="2134" y="156" width="6" height="1.3" fill="#af00db"/><rect x="2141" y="156" width="15" height="1.3" fill="#3b3b3b"/><rect x="2134" y="158" width="5" height="1.3" fill="#795e26"/><rect x="2139" y="158" width="1" height="1.3" fill="#0431fa"/><rect x="2140" y="158" width="1" height="1.3" fill="#0000ff"/><rect x="2141" y="158" width="13" height="1.3" fill="#a31515"/><rect x="2155" y="158" width="6" height="1.3" fill="#a31515"/><rect x="2162" y="158" width="7" height="1.3" fill="#a31515"/><rect x="2170" y="158" width="5" height="1.3" fill="#a31515"/><rect x="2176" y="158" width="15" height="1.3" fill="#a31515"/><rect x="2191" y="158" width="1" height="1.3" fill="#0431fa"/><rect x="2194" y="158" width="1" height="1.3" fill="#008000"/><rect x="2196" y="158" width="7" height="1.3" fill="#008000"/><rect x="2204" y="158" width="3" height="1.3" fill="#008000"/><rect x="2208" y="158" width="9" height="1.3" fill="#008000"/><rect x="2134" y="160" width="15" height="1.3" fill="#3b3b3b"/><rect x="2150" y="160" width="1" height="1.3" fill="#3b3b3b"/><rect x="2152" y="160" width="19" height="1.3" fill="#3b3b3b"/><rect x="2171" y="160" width="1" height="1.3" fill="#0431fa"/><rect x="2172" y="160" width="11" height="1.3" fill="#3b3b3b"/><rect x="2183" y="160" width="1" height="1.3" fill="#0431fa"/><rect x="2130" y="164" width="3" height="1.3" fill="#0000ff"/><rect x="2134" y="164" width="13" height="1.3" fill="#795e26"/><rect x="2147" y="164" width="1" height="1.3" fill="#0431fa"/><rect x="2148" y="164" width="10" height="1.3" fill="#001080"/><rect x="2158" y="164" width="1" height="1.3" fill="#0431fa"/><rect x="2159" y="164" width="1" height="1.3" fill="#3b3b3b"/><rect x="2134" y="166" width="3" height="1.3" fill="#a31515"/><rect x="2134" y="168" width="7" height="1.3" fill="#a31515"/><rect x="2142" y="168" width="1" height="1.3" fill="#a31515"/><rect x="2144" y="168" width="6" height="1.3" fill="#a31515"/><rect x="2151" y="168" width="5" height="1.3" fill="#a31515"/><rect x="2157" y="168" width="5" height="1.3" fill="#a31515"/><rect x="2163" y="168" width="3" height="1.3" fill="#a31515"/><rect x="2167" y="168" width="6" height="1.3" fill="#a31515"/><rect x="2174" y="168" width="9" height="1.3" fill="#a31515"/><rect x="2134" y="170" width="3" height="1.3" fill="#a31515"/><rect x="2134" y="172" width="3" height="1.3" fill="#af00db"/><rect x="2137" y="172" width="1" height="1.3" fill="#3b3b3b"/><rect x="2138" y="174" width="10" height="1.3" fill="#3b3b3b"/><rect x="2149" y="174" width="3" height="1.3" fill="#3b3b3b"/><rect x="2153" y="174" width="1" height="1.3" fill="#3b3b3b"/><rect x="2155" y="174" width="16" height="1.3" fill="#3b3b3b"/><rect x="2171" y="174" width="1" height="1.3" fill="#0431fa"/><rect x="2172" y="174" width="16" height="1.3" fill="#3b3b3b"/><rect x="2188" y="174" width="1" height="1.3" fill="#319331"/><rect x="2189" y="174" width="10" height="1.3" fill="#3b3b3b"/><rect x="2199" y="174" width="1" height="1.3" fill="#319331"/><rect x="2200" y="174" width="1" height="1.3" fill="#0431fa"/><rect x="2138" y="176" width="3" height="1.3" fill="#3b3b3b"/><rect x="2142" y="176" width="1" height="1.3" fill="#3b3b3b"/><rect x="2144" y="176" width="10" height="1.3" fill="#3b3b3b"/><rect x="2154" y="176" width="1" height="1.3" fill="#0431fa"/><rect x="2155" y="176" width="10" height="1.3" fill="#3b3b3b"/><rect x="2165" y="176" width="1" height="1.3" fill="#0431fa"/><rect x="2138" y="178" width="2" height="1.3" fill="#af00db"/><rect x="2141" y="178" width="3" height="1.3" fill="#3b3b3b"/><rect x="2145" y="178" width="2" height="1.3" fill="#0000ff"/><rect x="2148" y="178" width="4" height="1.3" fill="#0000ff"/><rect x="2152" y="178" width="1" height="1.3" fill="#3b3b3b"/><rect x="2142" y="180" width="5" height="1.3" fill="#af00db"/><rect x="2147" y="180" width="1" height="1.3" fill="#267f99"/><rect x="2148" y="180" width="1" height="1.3" fill="#0000ff"/><rect x="2149" y="180" width="7" height="1.3" fill="#a31515"/><rect x="2157" y="180" width="5" height="1.3" fill="#a31515"/><rect x="2163" y="180" width="3" height="1.3" fill="#a31515"/><rect x="2167" y="180" width="4" height="1.3" fill="#a31515"/><rect x="2172" y="180" width="6" height="1.3" fill="#a31515"/><rect x="2179" y="180" width="12" height="1.3" fill="#001080"/><rect x="2191" y="180" width="1" height="1.3" fill="#a31515"/><rect x="2192" y="180" width="1" height="1.3" fill="#267f99"/><rect x="2138" y="184" width="1" height="1.3" fill="#008000"/><rect x="2140" y="184" width="3" height="1.3" fill="#008000"/><rect x="2144" y="184" width="3" height="1.3" fill="#008000"/><rect x="2148" y="184" width="6" height="1.3" fill="#008000"/><rect x="2155" y="184" width="8" height="1.3" fill="#008000"/><rect x="2138" y="186" width="6" height="1.3" fill="#3b3b3b"/><rect x="2145" y="186" width="1" height="1.3" fill="#3b3b3b"/><rect x="2147" y="186" width="23" height="1.3" fill="#3b3b3b"/><rect x="2170" y="186" width="1" height="1.3" fill="#0431fa"/><rect x="2171" y="186" width="3" height="1.3" fill="#3b3b3b"/><rect x="2174" y="186" width="1" height="1.3" fill="#0431fa"/><rect x="2138" y="190" width="3" height="1.3" fill="#af00db"/><rect x="2142" y="190" width="3" height="1.3" fill="#3b3b3b"/><rect x="2146" y="190" width="2" height="1.3" fill="#af00db"/><rect x="2149" y="190" width="7" height="1.3" fill="#3b3b3b"/><rect x="2142" y="192" width="1" height="1.3" fill="#008000"/><rect x="2144" y="192" width="11" height="1.3" fill="#008000"/><rect x="2157" y="192" width="1" height="1.3" fill="#008000"/><rect x="2159" y="192" width="9" height="1.3" fill="#008000"/><rect x="2169" y="192" width="2" height="1.3" fill="#008000"/><rect x="2172" y="192" width="3" height="1.3" fill="#008000"/><rect x="2176" y="192" width="4" height="1.3" fill="#008000"/><rect x="2181" y="192" width="2" height="1.3" fill="#008000"/><rect x="2184" y="192" width="3" height="1.3" fill="#008000"/><rect x="2188" y="192" width="9" height="1.3" fill="#008000"/><rect x="2198" y="192" width="7" height="1.3" fill="#008000"/><rect x="2142" y="194" width="15" height="1.3" fill="#3b3b3b"/><rect x="2157" y="194" width="1" height="1.3" fill="#0431fa"/><rect x="2158" y="194" width="12" height="1.3" fill="#3b3b3b"/><rect x="2170" y="194" width="1" height="1.3" fill="#319331"/><rect x="2171" y="194" width="11" height="1.3" fill="#3b3b3b"/><rect x="2183" y="194" width="1" height="1.3" fill="#0000ff"/><rect x="2184" y="194" width="1" height="1.3" fill="#5b3030"/><rect x="2185" y="194" width="1" height="1.3" fill="#7b3814"/><rect x="2186" y="194" width="9" height="1.3" fill="#1f377f"/><rect x="2195" y="194" width="1" height="1.3" fill="#7b3814"/><rect x="2196" y="194" width="7" height="1.3" fill="#a31515"/><rect x="2203" y="194" width="1" height="1.3" fill="#7b3814"/><rect x="2204" y="194" width="3" height="1.3" fill="#1f377f"/><rect x="2207" y="194" width="1" height="1.3" fill="#7b3814"/><rect x="2208" y="194" width="1" height="1.3" fill="#5b3030"/><rect x="2209" y="194" width="1" height="1.3" fill="#319331"/><rect x="2210" y="194" width="1" height="1.3" fill="#0431fa"/><rect x="2142" y="196" width="16" height="1.3" fill="#3b3b3b"/><rect x="2158" y="196" width="1" height="1.3" fill="#0431fa"/><rect x="2146" y="198" width="9" height="1.3" fill="#001080"/><rect x="2155" y="198" width="13" height="1.3" fill="#3b3b3b"/><rect x="2168" y="198" width="1" height="1.3" fill="#319331"/><rect x="2169" y="198" width="11" height="1.3" fill="#3b3b3b"/><rect x="2181" y="198" width="1" height="1.3" fill="#0000ff"/><rect x="2182" y="198" width="1" height="1.3" fill="#5b3030"/><rect x="2183" y="198" width="1" height="1.3" fill="#7b3814"/><rect x="2184" y="198" width="9" height="1.3" fill="#1f377f"/><rect x="2193" y="198" width="1" height="1.3" fill="#7b3814"/><rect x="2194" y="198" width="12" height="1.3" fill="#a31515"/><rect x="2206" y="198" width="1" height="1.3" fill="#5b3030"/><rect x="2207" y="198" width="1" height="1.3" fill="#319331"/><rect x="2208" y="198" width="1" height="1.3" fill="#3b3b3b"/><rect x="2146" y="200" width="6" height="1.3" fill="#001080"/><rect x="2152" y="200" width="1" height="1.3" fill="#3b3b3b"/><rect x="2153" y="200" width="1" height="1.3" fill="#098658"/><rect x="2154" y="200" width="1" height="1.3" fill="#3b3b3b"/><rect x="2146" y="202" width="12" height="1.3" fill="#001080"/><rect x="2158" y="202" width="1" height="1.3" fill="#3b3b3b"/><rect x="2159" y="202" width="5" height="1.3" fill="#0000ff"/><rect x="2142" y="204" width="1" height="1.3" fill="#0431fa"/><rect x="2134" y="206" width="6" height="1.3" fill="#af00db"/><rect x="2141" y="206" width="9" height="1.3" fill="#267f99"/><rect x="2151" y="206" width="2" height="1.3" fill="#af00db"/><rect x="2154" y="206" width="2" height="1.3" fill="#3b3b3b"/><rect x="2138" y="208" width="5" height="1.3" fill="#795e26"/><rect x="2143" y="208" width="1" height="1.3" fill="#0431fa"/><rect x="2144" y="208" width="1" height="1.3" fill="#0000ff"/><rect x="2145" y="208" width="6" height="1.3" fill="#a31515"/><rect x="2152" y="208" width="10" height="1.3" fill="#a31515"/><rect x="2163" y="208" width="1" height="1.3" fill="#319331"/><rect x="2164" y="208" width="10" height="1.3" fill="#3b3b3b"/><rect x="2174" y="208" width="1" height="1.3" fill="#319331"/><rect x="2175" y="208" width="1" height="1.3" fill="#a31515"/><rect x="2177" y="208" width="1" height="1.3" fill="#319331"/><rect x="2178" y="208" width="1" height="1.3" fill="#3b3b3b"/><rect x="2179" y="208" width="1" height="1.3" fill="#319331"/><rect x="2180" y="208" width="1" height="1.3" fill="#a31515"/><rect x="2181" y="208" width="1" height="1.3" fill="#0431fa"/><rect x="2134" y="210" width="1" height="1.3" fill="#008000"/><rect x="2136" y="210" width="6" height="1.3" fill="#008000"/><rect x="2144" y="210" width="1" height="1.3" fill="#008000"/><rect x="2146" y="210" width="2" height="1.3" fill="#008000"/><rect x="2149" y="210" width="4" height="1.3" fill="#008000"/><rect x="2154" y="210" width="2" height="1.3" fill="#008000"/><rect x="2157" y="210" width="6" height="1.3" fill="#008000"/><rect x="2164" y="210" width="8" height="1.3" fill="#008000"/><rect x="2173" y="210" width="5" height="1.3" fill="#008000"/><rect x="2130" y="216" width="2" height="1.3" fill="#af00db"/><rect x="2133" y="216" width="8" height="1.3" fill="#3b3b3b"/><rect x="2142" y="216" width="2" height="1.3" fill="#1f377f"/><rect x="2145" y="216" width="10" height="1.3" fill="#a31515"/><rect x="2155" y="216" width="1" height="1.3" fill="#3b3b3b"/><rect x="2134" y="218" width="11" height="1.3" fill="#3b3b3b"/><rect x="2146" y="218" width="1" height="1.3" fill="#3b3b3b"/><rect x="2148" y="218" width="1" height="1.3" fill="#0431fa"/><rect x="2138" y="220" width="12" height="1.3" fill="#3b3b3b"/><rect x="2150" y="220" width="1" height="1.3" fill="#319331"/><rect x="2151" y="220" width="10" height="1.3" fill="#3b3b3b"/><rect x="2162" y="220" width="8" height="1.3" fill="#3b3b3b"/><rect x="2170" y="220" width="1" height="1.3" fill="#319331"/><rect x="2138" y="222" width="3" height="1.3" fill="#af00db"/><rect x="2142" y="222" width="8" height="1.3" fill="#3b3b3b"/><rect x="2151" y="222" width="2" height="1.3" fill="#af00db"/><rect x="2154" y="222" width="10" height="1.3" fill="#3b3b3b"/><rect x="2164" y="222" width="1" height="1.3" fill="#319331"/><rect x="2165" y="222" width="9" height="1.3" fill="#3b3b3b"/><rect x="2174" y="222" width="1" height="1.3" fill="#319331"/><rect x="2138" y="224" width="2" height="1.3" fill="#af00db"/><rect x="2141" y="224" width="14" height="1.3" fill="#3b3b3b"/><rect x="2155" y="224" width="2" height="1.3" fill="#319331"/><rect x="2157" y="224" width="9" height="1.3" fill="#3b3b3b"/><rect x="2166" y="224" width="1" height="1.3" fill="#319331"/><rect x="2167" y="224" width="1" height="1.3" fill="#7b3814"/><rect x="2168" y="224" width="6" height="1.3" fill="#a31515"/><rect x="2174" y="224" width="1" height="1.3" fill="#3b3b3b"/><rect x="2176" y="224" width="7" height="1.3" fill="#a31515"/><rect x="2183" y="224" width="1" height="1.3" fill="#3b3b3b"/><rect x="2185" y="224" width="6" height="1.3" fill="#a31515"/><rect x="2191" y="224" width="1" height="1.3" fill="#3b3b3b"/><rect x="2193" y="224" width="6" height="1.3" fill="#a31515"/><rect x="2199" y="224" width="1" height="1.3" fill="#7b3814"/><rect x="2200" y="224" width="1" height="1.3" fill="#319331"/><rect x="2134" y="226" width="1" height="1.3" fill="#0431fa"/><rect x="2134" y="230" width="10" height="1.3" fill="#3b3b3b"/><rect x="2145" y="230" width="1" height="1.3" fill="#3b3b3b"/><rect x="2147" y="230" width="9" height="1.3" fill="#3b3b3b"/><rect x="2156" y="230" width="2" height="1.3" fill="#0431fa"/><rect x="2134" y="234" width="4" height="1.3" fill="#af00db"/><rect x="2139" y="234" width="19" height="1.3" fill="#3b3b3b"/><rect x="2158" y="234" width="1" height="1.3" fill="#0431fa"/><rect x="2159" y="234" width="11" height="1.3" fill="#001080"/><rect x="2170" y="234" width="1" height="1.3" fill="#3b3b3b"/><rect x="2172" y="234" width="1" height="1.3" fill="#098658"/><rect x="2173" y="234" width="1" height="1.3" fill="#3b3b3b"/><rect x="2159" y="236" width="11" height="1.3" fill="#001080"/><rect x="2170" y="236" width="13" height="1.3" fill="#3b3b3b"/><rect x="2159" y="238" width="8" height="1.3" fill="#001080"/><rect x="2167" y="238" width="1" height="1.3" fill="#3b3b3b"/><rect x="2168" y="238" width="1" height="1.3" fill="#319331"/><rect x="2169" y="238" width="12" height="1.3" fill="#3b3b3b"/><rect x="2181" y="238" width="1" height="1.3" fill="#319331"/><rect x="2182" y="238" width="1" height="1.3" fill="#0431fa"/><rect x="2184" y="238" width="2" height="1.3" fill="#af00db"/><rect x="2187" y="238" width="9" height="1.3" fill="#3b3b3b"/><rect x="2198" y="238" width="1" height="1.3" fill="#008000"/><rect x="2200" y="238" width="4" height="1.3" fill="#008000"/><rect x="2205" y="238" width="11" height="1.3" fill="#008000"/><rect x="2138" y="240" width="3" height="1.3" fill="#af00db"/><rect x="2142" y="240" width="1" height="1.3" fill="#3b3b3b"/><rect x="2144" y="240" width="2" height="1.3" fill="#af00db"/><rect x="2147" y="240" width="12" height="1.3" fill="#3b3b3b"/><rect x="2159" y="240" width="1" height="1.3" fill="#0431fa"/><rect x="2160" y="240" width="14" height="1.3" fill="#3b3b3b"/><rect x="2175" y="240" width="11" height="1.3" fill="#3b3b3b"/><rect x="2186" y="240" width="1" height="1.3" fill="#0431fa"/><rect x="2187" y="240" width="1" height="1.3" fill="#3b3b3b"/><rect x="2142" y="242" width="4" height="1.3" fill="#af00db"/><rect x="2134" y="246" width="8" height="1.3" fill="#3b3b3b"/><rect x="2143" y="246" width="1" height="1.3" fill="#3b3b3b"/><rect x="2145" y="246" width="9" height="1.3" fill="#3b3b3b"/><rect x="2154" y="246" width="2" height="1.3" fill="#0431fa"/><rect x="2134" y="248" width="10" height="1.3" fill="#3b3b3b"/><rect x="2145" y="248" width="1" height="1.3" fill="#3b3b3b"/><rect x="2147" y="248" width="8" height="1.3" fill="#3b3b3b"/><rect x="2156" y="248" width="1" height="1.3" fill="#3b3b3b"/><rect x="2158" y="248" width="10" height="1.3" fill="#3b3b3b"/><rect x="2134" y="252" width="5" height="1.3" fill="#795e26"/><rect x="2139" y="252" width="1" height="1.3" fill="#0431fa"/><rect x="2140" y="252" width="1" height="1.3" fill="#0000ff"/><rect x="2141" y="252" width="4" height="1.3" fill="#a31515"/><rect x="2146" y="252" width="7" height="1.3" fill="#a31515"/><rect x="2154" y="252" width="5" height="1.3" fill="#a31515"/><rect x="2160" y="252" width="3" height="1.3" fill="#a31515"/><rect x="2164" y="252" width="1" height="1.3" fill="#319331"/><rect x="2165" y="252" width="10" height="1.3" fill="#3b3b3b"/><rect x="2175" y="252" width="1" height="1.3" fill="#319331"/><rect x="2176" y="252" width="1" height="1.3" fill="#a31515"/><rect x="2177" y="252" width="1" height="1.3" fill="#0431fa"/><rect x="2134" y="254" width="5" height="1.3" fill="#795e26"/><rect x="2139" y="254" width="1" height="1.3" fill="#0431fa"/><rect x="2140" y="254" width="1" height="1.3" fill="#0000ff"/><rect x="2141" y="254" width="6" height="1.3" fill="#a31515"/><rect x="2148" y="254" width="10" height="1.3" fill="#a31515"/><rect x="2159" y="254" width="5" height="1.3" fill="#a31515"/><rect x="2165" y="254" width="1" height="1.3" fill="#319331"/><rect x="2166" y="254" width="10" height="1.3" fill="#3b3b3b"/><rect x="2176" y="254" width="4" height="1.3" fill="#0000ff"/><rect x="2180" y="254" width="1" height="1.3" fill="#319331"/><rect x="2182" y="254" width="8" height="1.3" fill="#a31515"/><rect x="2190" y="254" width="1" height="1.3" fill="#0431fa"/><rect x="2134" y="256" width="2" height="1.3" fill="#af00db"/><rect x="2137" y="256" width="12" height="1.3" fill="#3b3b3b"/><rect x="2138" y="258" width="5" height="1.3" fill="#795e26"/><rect x="2143" y="258" width="1" height="1.3" fill="#0431fa"/><rect x="2144" y="258" width="1" height="1.3" fill="#0000ff"/><rect x="2145" y="258" width="8" height="1.3" fill="#a31515"/><rect x="2154" y="258" width="4" height="1.3" fill="#a31515"/><rect x="2159" y="258" width="3" height="1.3" fill="#a31515"/><rect x="2163" y="258" width="6" height="1.3" fill="#a31515"/><rect x="2170" y="258" width="1" height="1.3" fill="#319331"/><rect x="2171" y="258" width="10" height="1.3" fill="#3b3b3b"/><rect x="2182" y="258" width="1" height="1.3" fill="#3b3b3b"/><rect x="2184" y="258" width="3" height="1.3" fill="#795e26"/><rect x="2187" y="258" width="1" height="1.3" fill="#7b3814"/><rect x="2188" y="258" width="11" height="1.3" fill="#3b3b3b"/><rect x="2199" y="258" width="1" height="1.3" fill="#7b3814"/><rect x="2200" y="258" width="4" height="1.3" fill="#0000ff"/><rect x="2204" y="258" width="1" height="1.3" fill="#319331"/><rect x="2206" y="258" width="8" height="1.3" fill="#a31515"/><rect x="2214" y="258" width="1" height="1.3" fill="#0431fa"/></g>
<rect x="2242" y="114" width="1" height="767" fill="#ececec"/>
<rect x="2242" y="355" width="14" height="265" fill="#c3c3c3"/>
<rect x="2243" y="446" width="13" height="2" fill="#555"/>
</svg><div id="panel" class="a"></div>
<div class="a" style="left:467px;top:892px;font-size:10.4px;line-height:14px;color:#717171;white-space:nowrap">OUTPUT</div>
<div class="a" style="left:535px;top:892px;font-size:10.4px;line-height:14px;color:#717171;white-space:nowrap">DEBUG CONSOLE</div>
<div class="a" style="left:649px;top:892px;font-size:10.4px;line-height:14px;color:#333;white-space:nowrap">TERMINAL</div>
<div class="a" style="left:727px;top:892px;font-size:10.4px;line-height:14px;color:#717171;white-space:nowrap">PORTS</div>
<div class="a" style="left:647px;top:909px;width:58px;height:1px;background:#333"></div>
<svg class="a" style="left:2190px;top:886px" width="66" height="24" viewBox="2190 886 66 24"><g fill="none" stroke="#3a1a8a" stroke-width="1.2"><path d="M2202 901 L2207 896 L2212 901"/><path d="M2228.5 893.5 L2237.5 902.5 M2237.5 893.5 L2228.5 902.5"/></g></svg>
<div class="a" style="left:447px;top:915px;width:1809px;height:22px;background:#e4e4e4"></div>
<svg class="a" style="left:450px;top:920px" width="14" height="12" viewBox="0 0 14 12"><path d="M2.5 3.5 L7 8 L11.5 3.5" fill="none" stroke="#4a1fa8" stroke-width="1.1"/></svg>
<div class="a" style="left:467px;top:919px;font-size:10.6px;line-height:14px;font-weight:bold;color:#555">TERMINAL</div>
<svg class="a" style="left:2170px;top:915px" width="86" height="22" viewBox="2170 915 86 22"><g fill="none" stroke="#3a1a8a" stroke-width="1.2"><path d="M2182.5 919 V931 M2176.5 925 H2188.5"/><path d="M2193.5 924 L2196.5 927 L2199.5 924" stroke-width="1"/><path d="M2244.5 921 L2248.5 925 L2244.5 929"/></g><g fill="#3a1a8a"><circle cx="2214" cy="925" r="1.1"/><circle cx="2219.5" cy="925" r="1.1"/><circle cx="2225" cy="925" r="1.1"/></g><rect x="2234" y="915" width="1" height="22" fill="#d0d0d0"/></svg>
<div class="a" style="left:467px;top:1362px;width:1495px;height:38px;background:#add6ff"></div>
<div class="a" style="left:467px;top:1400px;width:319px;height:19px;background:#add6ff"></div>
<div class="a mono" style="left:467px;top:945px;font-size:14.6px;letter-spacing:-0.33px;line-height:19px;white-space:pre;color:#138a13">The result has been saved in ocr_results/000104_result.png.</div>
<div class="a mono" style="left:467px;top:964px;font-size:14.6px;letter-spacing:-0.33px;line-height:19px;white-space:pre;color:#138a13">The result has been saved in ocr_results/000104_result.json.</div>
<div class="a mono" style="left:467px;top:983px;font-size:14.6px;letter-spacing:-0.33px;line-height:19px;white-space:pre;color:#138a13">The result has been saved in ocr_results/000192_result.png.</div>
<div class="a mono" style="left:467px;top:1002px;font-size:14.6px;letter-spacing:-0.33px;line-height:19px;white-space:pre;color:#138a13">The result has been saved in ocr_results/000192_result.json.</div>
<div class="a mono" style="left:467px;top:1021px;font-size:14.6px;letter-spacing:-0.33px;line-height:19px;white-space:pre;color:#138a13">The result has been saved in ocr_results/000303_result.png.</div>
<div class="a mono" style="left:467px;top:1040px;font-size:14.6px;letter-spacing:-0.33px;line-height:19px;white-space:pre;color:#138a13">The result has been saved in ocr_results/000303_result.json.</div>
<div class="a mono" style="left:467px;top:1059px;font-size:14.6px;letter-spacing:-0.33px;line-height:19px;white-space:pre;color:#138a13">The result has been saved in ocr_results/000149_result.png.</div>
<div class="a mono" style="left:467px;top:1078px;font-size:14.6px;letter-spacing:-0.33px;line-height:19px;white-space:pre;color:#138a13">The result has been saved in ocr_results/000149_result.json.</div>
<div class="a mono" style="left:467px;top:1097px;font-size:14.6px;letter-spacing:-0.33px;line-height:19px;white-space:pre;color:#138a13">The result has been saved in ocr_results/000062_result.png.</div>
<div class="a mono" style="left:467px;top:1116px;font-size:14.6px;letter-spacing:-0.33px;line-height:19px;white-space:pre;color:#138a13">The result has been saved in ocr_results/000062_result.json.</div>
<div class="a mono" style="left:467px;top:1135px;font-size:14.6px;letter-spacing:-0.33px;line-height:19px;white-space:pre;color:#138a13">The result has been saved in ocr_results/000147_result.png.</div>
<div class="a mono" style="left:467px;top:1154px;font-size:14.6px;letter-spacing:-0.33px;line-height:19px;white-space:pre;color:#138a13">The result has been saved in ocr_results/000147_result.json.</div>
<div class="a mono" style="left:467px;top:1173px;font-size:14.6px;letter-spacing:-0.33px;line-height:19px;white-space:pre;color:#138a13">The result has been saved in ocr_results/000119_result.png.</div>
<div class="a mono" style="left:467px;top:1192px;font-size:14.6px;letter-spacing:-0.33px;line-height:19px;white-space:pre;color:#138a13">The result has been saved in ocr_results/000119_result.json.</div>
<div class="a mono" style="left:467px;top:1211px;font-size:14.6px;letter-spacing:-0.33px;line-height:19px;white-space:pre;color:#138a13">The result has been saved in ocr_results/000158_result.png.</div>
<div class="a mono" style="left:467px;top:1230px;font-size:14.6px;letter-spacing:-0.33px;line-height:19px;white-space:pre;color:#138a13">The result has been saved in ocr_results/000158_result.json.</div>
<div class="a mono" style="left:467px;top:1249px;font-size:14.6px;letter-spacing:-0.33px;line-height:19px;white-space:pre;color:#138a13">The result has been saved in ocr_results/000280_result.png.</div>
<div class="a mono" style="left:467px;top:1268px;font-size:14.6px;letter-spacing:-0.33px;line-height:19px;white-space:pre;color:#138a13">The result has been saved in ocr_results/000280_result.json.</div>
<div class="a mono" style="left:467px;top:1287px;font-size:14.6px;letter-spacing:-0.33px;line-height:19px;white-space:pre;color:#138a13">The result has been saved in ocr_results/000020_result.png.</div>
<div class="a mono" style="left:467px;top:1306px;font-size:14.6px;letter-spacing:-0.33px;line-height:19px;white-space:pre;color:#138a13">The result has been saved in ocr_results/000020_result.json.</div>
<div class="a mono" style="left:467px;top:1325px;font-size:14.6px;letter-spacing:-0.33px;line-height:19px;white-space:pre;color:#138a13">The result has been saved in ocr_results/000083_result.png.</div>
<div class="a mono" style="left:467px;top:1344px;font-size:14.6px;letter-spacing:-0.33px;line-height:19px;white-space:pre;color:#138a13">The result has been saved in ocr_results/000083_result.json.</div>
<div class="a mono" style="left:467px;top:1363px;font-size:14.6px;letter-spacing:-0.33px;line-height:19px;white-space:pre;color:#333">OCR results saved to: ./ocr_results</div>
<div class="a mono" style="left:467px;top:1382px;font-size:14.6px;letter-spacing:-0.33px;line-height:19px;white-space:pre;color:#333">Total processing time: 108.62 seconds</div>
<div class="a mono" style="left:467px;top:1401px;font-size:14.6px;letter-spacing:-0.33px;line-height:19px;white-space:pre;color:#333">Average time per image: 0.343 seconds</div>
<div class="a mono" style="left:467px;top:1420px;font-size:14.6px;letter-spacing:-0.33px;line-height:19px;white-space:pre;color:#333">(paddle2) <span style="color:#2a7f9e">tmzn@tmzn-server</span> <span style="color:#2a7f9e">/media/tmzn/DATA5/ocr_paddle</span> <span style="color:#9b1fb0">-&gt;</span> </div>
<div class="a" style="left:962px;top:1419px;width:8px;height:17px;background:#1f1f1f"></div>
<svg class="a" style="left:450px;top:1418px" width="14" height="19" viewBox="0 0 14 19"><circle cx="7" cy="10" r="3.2" fill="none" stroke="#9a9a9a" stroke-width="1"/></svg>
<svg class="a" style="left:780px;top:1395px" width="360" height="30" viewBox="780 1395 360 30"><path d="M795 1410 L818 1400 L818 1406.5 L1130 1413.5 L818 1415 L818 1421 Z" fill="#1fd3d6"/></svg>
<div class="a" style="left:1969px;top:937px;width:1px;height:501px;background:#dcdcdc"></div>
<div class="a" style="left:1969px;top:944px;width:6px;height:4px;background:#1e88e5"></div>
<div class="a" style="left:1970px;top:948px;width:13px;height:1px;background:#dcdcdc"></div>
<div class="a" style="left:1983px;top:937px;width:1px;height:501px;background:#dcdcdc"></div>
<div class="a" style="left:1970px;top:1433px;width:4px;height:5px;background:#b8b8b8"></div>
<div class="a" style="left:2234px;top:937px;width:22px;height:501px;background:#e4e4e4;border-left:1px solid #d4d4d4"></div>
<div class="a" style="left:1984px;top:959px;width:250px;height:22px;background:#fdd9e4"></div>
<svg class="a" style="left:1993px;top:940px" width="16" height="16" viewBox="0 0 16 16"><rect x="1.5" y="1.5" width="13" height="13" rx="1" fill="none" stroke="#4a1fa8" stroke-width="1.1"/><path d="M4 5 L7 8 L4 11 M8 11.5 H12" fill="none" stroke="#4a1fa8" stroke-width="1.1"/></svg>
<div class="a" style="left:2014px;top:941px;font-size:13.5px;line-height:16px;color:#8b6f1e;white-space:nowrap">zsh <span style="margin-left:3px">PaddleX</span></div>
<svg class="a" style="left:1993px;top:962px" width="16" height="16" viewBox="0 0 16 16"><rect x="1.5" y="1.5" width="13" height="13" rx="1" fill="none" stroke="#4a1fa8" stroke-width="1.1"/><path d="M4 5 L7 8 L4 11 M8 11.5 H12" fill="none" stroke="#4a1fa8" stroke-width="1.1"/></svg>
<div class="a" style="left:2014px;top:963px;font-size:13.5px;line-height:16px;color:#6b6b6b">Python</div>
<svg class="a" style="left:2208px;top:939px" width="16" height="16" viewBox="0 0 16 16"><path d="M8 1.8 L14.8 13.8 H1.2 Z" fill="none" stroke="#a88a2a" stroke-width="1.1" stroke-linejoin="round"/><path d="M8 6 V10 M8 11.3 V12.5" stroke="#a88a2a" stroke-width="1.2"/></svg>
<svg class="a" style="left:2238px;top:939px" width="16" height="16" viewBox="0 0 16 16"><path d="M8 1.8 L14.8 13.8 H1.2 Z" fill="none" stroke="#6a6a6a" stroke-width="1.1" stroke-linejoin="round"/><path d="M8 6 V10 M8 11.3 V12.5" stroke="#6a6a6a" stroke-width="1.2"/></svg><svg class="a" style="left:2090px;top:1260px" width="160" height="140" viewBox="2090 1260 160 140">
<defs>
<linearGradient id="hairg" x1="0" y1="0" x2="0" y2="1"><stop offset="0" stop-color="#3aa0c8"/><stop offset="1" stop-color="#5cc3cf"/></linearGradient>
<linearGradient id="tailg" x1="0" y1="0" x2="1" y2="1"><stop offset="0" stop-color="#3f9fd0"/><stop offset="0.6" stop-color="#48b5cc"/><stop offset="1" stop-color="#7fcfd8"/></linearGradient>
</defs>
<g fill="#4db3cb" stroke="#4db3cb" stroke-width="3" stroke-linejoin="round">
<path d="M2115.0 1269.5 L2121.8 1281.7 L2135.4 1284.4 L2125.9 1294.6 L2127.6 1308.4 L2115.0 1302.5 L2102.4 1308.4 L2104.1 1294.6 L2094.6 1284.4 L2108.2 1281.7 Z"/>
<path d="M2115.0 1310.5 L2121.8 1322.7 L2135.4 1325.4 L2125.9 1335.6 L2127.6 1349.4 L2115.0 1343.5 L2102.4 1349.4 L2104.1 1335.6 L2094.6 1325.4 L2108.2 1322.7 Z"/>
<path d="M2115.0 1351.5 L2121.8 1363.7 L2135.4 1366.4 L2125.9 1376.6 L2127.6 1390.4 L2115.0 1384.5 L2102.4 1390.4 L2104.1 1376.6 L2094.6 1366.4 L2108.2 1363.7 Z"/>
</g>
<g fill="none" stroke="#3d3d3d" stroke-width="1.6">
<rect x="2106.5" y="1285" width="17" height="10.5" rx="1"/><path d="M2115 1281.5 V1301.5"/>
<circle cx="2111" cy="1328" r="1.8"/><path d="M2118.5 1338 Q2119.5 1341 2117 1343" stroke-width="2"/>
<circle cx="2116" cy="1371.5" r="6.5" stroke-width="2.2"/>
</g>
<g fill="#3d3d3d"><rect x="2114.5" y="1362.5" width="3" height="3"/><rect x="2114.5" y="1377.5" width="3" height="3"/><rect x="2107" y="1370" width="3" height="3"/><rect x="2122" y="1370" width="3" height="3"/><rect x="2108.5" y="1364.5" width="3" height="3"/><rect x="2120.5" y="1364.5" width="3" height="3"/><rect x="2108.5" y="1376" width="3" height="3"/><rect x="2120.5" y="1376" width="3" height="3"/></g>
<!-- right tail -->
<path d="M2206 1308 Q2216 1306 2222 1311 Q2227 1322 2229 1336 Q2236 1354 2240.5 1370 Q2238 1378 2233 1378 Q2222 1374 2212 1377 Q2216 1370 2218 1362 Q2219 1348 2214 1338 Q2207 1328 2204 1318 Z" fill="url(#tailg)"/>
<path d="M2223 1315 Q2230 1312 2234 1318 Q2234 1326 2232 1334 L2228 1330 Z" fill="#48b0d0"/>
<path d="M2228.5 1317 L2238 1322 L2231 1326 Z M2229 1326 L2234.5 1333 L2228 1333 Z" fill="none" stroke="#d9475a" stroke-width="1"/>
<!-- left tail -->
<path d="M2148 1312 Q2140 1330 2139 1350 Q2140 1368 2148 1378 Q2154 1384 2159 1386 Q2161 1374 2166.5 1363 Q2160 1352 2156 1340 Q2153 1326 2154 1316 Z" fill="url(#tailg)"/>
<!-- body -->
<path d="M2172 1355 Q2166 1368 2168 1380 Q2172 1388 2182 1387 Q2192 1389 2200 1384 Q2206 1376 2203 1364 Q2199 1356 2192 1354 Q2182 1352 2172 1355 Z" fill="#3b3034"/>
<path d="M2173 1355 L2181 1355 L2183 1376 L2177 1378 Z" fill="#49b6d2"/>
<path d="M2186 1356 Q2192 1362 2193 1370 L2198 1369 Q2198 1360 2193 1355 Z" fill="#8a7d86"/>
<path d="M2168.5 1355 Q2172 1354 2174 1357 L2174 1360 L2168 1359 Z M2194 1355 Q2198 1355 2200 1358 L2197 1360 Z" fill="#49b6d2"/>
<!-- ears -->
<path d="M2161.5 1288 L2172 1297 L2159 1305 Z" fill="#262626" stroke="#d02a2a" stroke-width="0.9"/>
<path d="M2218.5 1298 L2201.5 1304 L2207 1315 Z" fill="#262626" stroke="#d02a2a" stroke-width="0.9"/>
<!-- head hair -->
<path d="M2147 1318 Q2150 1300 2168 1294 Q2190 1288 2206 1302 Q2214 1314 2212 1330 Q2210 1342 2204 1352 Q2196 1348 2192 1340 L2188 1324 Q2176 1316 2160 1322 Q2152 1328 2150 1336 Z" fill="url(#hairg)"/>
<path d="M2177.5 1296 Q2180 1287 2189 1285.5" fill="none" stroke="#3a9fc8" stroke-width="1.4"/>
<path d="M2160 1301 Q2186 1290 2208 1305" fill="none" stroke="#eaeaea" stroke-width="1"/>
<!-- face -->
<path d="M2156 1326 Q2154 1346 2164 1353 Q2176 1357 2186 1350 Q2191 1344 2190 1336 Q2180 1334 2174 1326 Q2166 1320 2156 1326 Z" fill="#f8eeee"/>
<path d="M2166 1322 Q2172 1334 2186 1341 L2191 1338 Q2190 1326 2182 1318 Q2172 1314 2166 1322 Z" fill="#4fb0d2"/>
<path d="M2159 1330 L2164.5 1334 L2159.5 1338 M2184 1335 L2178 1339.5 L2184 1344" fill="none" stroke="#151515" stroke-width="1.3"/>
<path d="M2166 1344.5 Q2170 1351 2174.5 1344.5 Z" fill="#e0504a"/><circle cx="2170" cy="1346.5" r="1.4" fill="#f7c933"/>
</svg>
<div id="status" class="a"></div>
<svg class="a" style="left:0;top:1438px" width="640" height="22" viewBox="0 1438 640 22"><g fill="none" stroke="#fff" stroke-width="1.1" stroke-linejoin="round" stroke-linecap="round">
<path d="M13 1451 L17 1447 L13 1443 M21 1445 L17.5 1449 L21 1453" />
<circle cx="42" cy="1443.5" r="1.8"/><circle cx="42" cy="1454.5" r="1.8"/><circle cx="48" cy="1446" r="1.8"/><path d="M42 1445.3 V1452.7 M48 1447.8 Q48 1451 43 1452"/>
<path d="M168.5 1446 A5.5 5.5 0 0 1 179 1447 M179.5 1452 A5.5 5.5 0 0 1 169 1451 M177 1445 L179.5 1447.5 L181 1444.5 M171 1453 L168.5 1450.5 L167 1453.5"/>
<circle cx="202" cy="1449" r="5.8"/><path d="M199.5 1446.5 L204.5 1451.5 M204.5 1446.5 L199.5 1451.5"/>
<path d="M229 1443 L235 1454.5 H223 Z M229 1447 V1450.5 M229 1452 V1452.6"/>
<path d="M266 1449 L268.5 1443.5 L271 1449 M267 1447 H270 M268.5 1449 V1455 M263 1444 Q261.5 1449 263 1453 M274 1444 Q275.5 1449 274 1453 M265.5 1455 L268.5 1449.5 L271.5 1455"/>
<path d="M337 1446 L334 1449 L337 1452 M398 1446 L401 1449 L398 1452"/>
<path d="M366 1444.5 L373 1449 L366 1453.5 Z"/>
<path d="M454 1446 A5.5 5.5 0 0 1 464 1447 M464 1452 A5.5 5.5 0 0 1 454 1451 M453 1444 L465 1454"/>
<circle cx="489" cy="1449" r="5.8"/><path d="M486.5 1446.5 L491.5 1451.5 M491.5 1446.5 L486.5 1451.5"/>
<circle cx="519" cy="1449" r="5.8"/><circle cx="519" cy="1449" r="2.5"/>
<path d="M544 1446.5 H547 L551 1443 V1455 L547 1451.5 H544 Z M554 1446 Q556 1449 554 1452"/>
<path d="M579 1443 Q584 1448 583 1452 Q582 1455 579 1455 Q576 1455 575 1452 Q575 1448 579 1443 Z"/>
</g>
<g fill="#fff"><path d="M312 1444 V1454 L306 1449 Z"/><path d="M427 1444 V1454 L433 1449 Z"/></g>
<text x="602" y="1453.5" font-family="Liberation Sans" font-size="10" fill="#fff" font-weight="bold">AA</text>
</svg>
<div class="a" style="left:57px;top:1441px;font-size:12.3px;line-height:16px;color:#fff;white-space:nowrap;">release/3.0-beta2*</div>
<div class="a" style="left:212px;top:1441px;font-size:12.3px;line-height:16px;color:#fff;white-space:nowrap;">0</div>
<div class="a" style="left:240px;top:1441px;font-size:12.3px;line-height:16px;color:#fff;white-space:nowrap;">0</div>
<div class="a" style="left:279px;top:1441px;font-size:12.3px;line-height:16px;color:#fff;white-space:nowrap;">0</div>
<div class="a" style="left:1583px;top:1441px;font-size:12.3px;line-height:16px;color:#fff;white-space:nowrap;">Ln 49, Col 49</div>
<div class="a" style="left:1670px;top:1441px;font-size:12.3px;line-height:16px;color:#fff;white-space:nowrap;">Spaces: 4</div>
<div class="a" style="left:1739px;top:1441px;font-size:12.3px;line-height:16px;color:#fff;white-space:nowrap;">UTF-8</div>
<div class="a" style="left:1787px;top:1441px;font-size:12.3px;line-height:16px;color:#fff;white-space:nowrap;">LF</div>
<div class="a" style="left:1815px;top:1441px;font-size:12.3px;line-height:16px;color:#fff;white-space:nowrap;font-size:12px">{ }</div>
<div class="a" style="left:1834px;top:1441px;font-size:12.3px;line-height:16px;color:#fff;white-space:nowrap;">Python</div>
<div class="a" style="left:1888px;top:1441px;font-size:12.3px;line-height:16px;color:#fff;white-space:nowrap;">3.9.21 ('paddle2')</div>
<div class="a" style="left:1999px;top:1441px;font-size:12.3px;line-height:16px;color:#fff;white-space:nowrap;font-size:11.6px;top:1442px">存在0个异常标点</div>
<div class="a" style="left:2121px;top:1441px;font-size:12.3px;line-height:16px;color:#fff;white-space:nowrap;">CodeMoss</div>
<svg class="a" style="left:2100px;top:1438px" width="156" height="22" viewBox="2100 1438 156 22"><g fill="none" stroke="#fff" stroke-width="1.1" stroke-linejoin="round">
<path d="M2106 1449 L2109.5 1453 L2117 1444"/>
<path d="M2197 1443 H2204 L2208 1447 V1455 H2197 Z M2199 1449 H2204 M2199 1452 H2203 M2205 1451 L2211 1457"/>
<path d="M2228 1454 H2240 L2238 1451 V1447 A4 4 0 0 0 2230 1447 V1451 Z M2232 1456 H2236"/>
</g><circle cx="2239" cy="1444" r="2.5" fill="#fff"/></svg><div id="task" class="a" style="background:linear-gradient(90deg,#24282c 0%,#2a2f34 20%,#282d32 40%,#2a2d30 55%,#272b2f 75%,#2b2c2f 100%);border-top:1px solid #1c2226"></div>
<div class="a" style="left:98px;top:1460px;width:49px;height:44px;background:#44484c;border-top:2px solid #55595d"></div>
<div class="a" style="left:148px;top:1460px;width:51px;height:44px;background:#44484c;border-top:2px solid #55595d"></div>
<div class="a" style="left:200px;top:1460px;width:51px;height:44px;background:#44484c;border-top:2px solid #55595d"></div>
<div class="a" style="left:252px;top:1460px;width:51px;height:44px;background:#44484c;border-top:2px solid #55595d"></div>
<div class="a" style="left:304px;top:1460px;width:51px;height:44px;background:#44484c;border-top:2px solid #55595d"></div>
<div class="a" style="left:356px;top:1460px;width:52px;height:44px;background:#33373b;border-top:2px solid #55595d"></div>
<div class="a" style="left:409px;top:1460px;width:51px;height:44px;background:#33373b;border-top:2px solid #55595d"></div>
<div class="a" style="left:461px;top:1460px;width:50px;height:44px;background:#2e6486;border-top:2px solid #3daee9"></div>
<svg class="a" style="left:0;top:1460px" width="520" height="44" viewBox="0 1460 520 44">
<g transform="translate(21.5 1481.5)"><circle r="12.5" fill="#eceff1"/><circle r="6" fill="#262a2e"/>
<g fill="#262a2e"><rect x="-2" y="-13" width="4" height="4"/><rect x="-2" y="9" width="4" height="4" /><rect x="9" y="-2" width="4" height="4"/><rect x="-13" y="-2" width="4" height="4"/>
<rect x="6" y="-10" width="4" height="4" transform="rotate(45 8 -8)"/><rect x="-10" y="6" width="4" height="4" transform="rotate(45 -8 8)"/><rect x="6" y="6" width="4" height="4" transform="rotate(45 8 8)"/><rect x="-10" y="-10" width="4" height="4" transform="rotate(45 -8 -8)"/></g></g>
<rect x="56" y="1468" width="28" height="28" rx="2" fill="#1f2326"/><path d="M58 1474 H82 M58 1488 H82" stroke="#2b2f33" stroke-width="1"/>
<path d="M59 1478 H77 M59 1485 H67" stroke="#3daee9" stroke-width="2"/><path d="M67 1485 H81 M77 1478 H81" stroke="#444" stroke-width="2"/><circle cx="77" cy="1478" r="2.3" fill="#fff"/><circle cx="67" cy="1485" r="2.3" fill="#fff"/>
<path d="M107 1469 H118 L121 1472 H137 V1496 H107 Z" fill="#2f8fc9"/><rect x="109" y="1472" width="26" height="6" fill="#f4f4f4"/><path d="M107 1477 H137 V1496 H107 Z" fill="#3aa3dc"/>
<circle cx="174" cy="1482" r="15.5" fill="#dd4b3e"/><path d="M174 1482 L174 1466.5 A15.5 15.5 0 0 1 187.4 1489.75 Z" fill="#ffcd40"/><path d="M174 1482 L187.4 1489.75 A15.5 15.5 0 0 1 160.6 1489.75 Z" fill="#1f9f55"/><path d="M174 1482 L160.6 1489.75 A15.5 15.5 0 0 1 174 1466.5 Z" fill="#dd4b3e"/><circle cx="174" cy="1482" r="7" fill="#fff"/><circle cx="174" cy="1482" r="5.5" fill="#4a8af4"/>
<rect x="212" y="1468" width="28" height="28" fill="#2b2f31"/><path d="M223 1476 L229 1482 L223 1488" fill="none" stroke="#888" stroke-width="1.3"/><circle cx="226" cy="1497.5" r="5.5" fill="#27ae60"/><path d="M226 1494.5 V1500.5 M223 1497.5 H229" stroke="#fff" stroke-width="1.4"/>
<rect x="262" y="1466" width="32" height="32" rx="5" fill="#fff"/><circle cx="278" cy="1482" r="10" fill="none" stroke="#1e88e5" stroke-width="4" stroke-dasharray="24 7"/><circle cx="278" cy="1497.5" r="5.5" fill="#27ae60"/><path d="M278 1494.5 V1500.5 M275 1497.5 H281" stroke="#fff" stroke-width="1.4"/>
<rect x="315" y="1480" width="19" height="19" rx="3" fill="none" stroke="#f39c12" stroke-width="5"/><rect x="324" y="1467" width="19" height="19" rx="3" fill="none" stroke="#1a9ad6" stroke-width="5"/>
<rect x="368" y="1468" width="28" height="28" rx="6" fill="#f7f7f7"/><path d="M374 1488 V1476 L382 1484 L390 1476 V1488" fill="none" stroke="#2e7fd6" stroke-width="3"/>
<circle cx="431" cy="1479" r="9" fill="none" stroke="#4f5356" stroke-width="2.5"/><path d="M437.5 1485.5 L444 1492" stroke="#4f5356" stroke-width="3"/>
<g transform="translate(470 1466) scale(0.32)"><path fill="#23a9f2" d="M96.46 10.8 L75.86 0.87 a6.23 6.23 0 0 0-7.1 1.2 L29.35 38.04 12.19 25.01 a4.16 4.16 0 0 0-5.32.24 L1.36 30.26 a4.16 4.16 0 0 0 0 6.16 L16.26 50 1.36 63.58 a4.16 4.16 0 0 0 0 6.16 l5.51 5.01 a4.16 4.16 0 0 0 5.32.24 l17.16-13.03 39.41 35.97 a6.23 6.23 0 0 0 7.1 1.2 l20.6-9.92 A6.24 6.24 0 0 0 100 83.58 V16.42 a6.24 6.24 0 0 0-3.54-5.62 Z M75.02 72.7 45.11 50 l29.91-22.7 Z"/></g>
</svg>
<svg class="a" style="left:1700px;top:1460px" width="556" height="44" viewBox="1700 1460 556 44">
<g fill="none" stroke="#eee" stroke-width="1.3">
<path d="M1710 1488 H1722 L1720 1485 V1479 A4 4 0 0 0 1712 1479 V1485 Z M1714 1490 H1718 M1708 1476 L1710 1474 M1724 1476 L1722 1474"/>
<path d="M1956 1472 H1962 M1950 1475 H1962 V1490 H1950 Z M1953 1479 H1959 M1953 1483 H1959 M1953 1486 H1957"/>
<rect x="1917.5" y="1476.5" width="18" height="12"/><path d="M1920 1479.5 H1933 M1920 1482.5 H1933 M1922 1485.5 H1931 M1926.5 1476.5 V1473 Q1926.5 1471 1929 1471"/>
<path d="M2009 1481 A7 7 0 0 1 2022 1478 M2023 1482 A7 7 0 0 1 2010 1485 M2019 1478 H2022.5 V1474.5 M2013 1485 H2009.5 V1488.5"/>
<path d="M2052 1477 Q2055 1482 2052 1487 M2055 1475 Q2059 1482 2055 1489" stroke="#bbb"/>
<rect x="2070" y="1475" width="14" height="11"/><path d="M2075 1489 H2081 M2078 1486 V1489"/>
<rect x="2222" y="1474" width="15" height="15"/>
</g>
<path d="M2040 1478 H2044 L2049 1474 V1490 L2044 1486 H2040 Z" fill="#eee"/><path d="M2038 1473 L2057 1492" stroke="#e74c3c" stroke-width="1.2"/>
<path d="M2066 1474 V1490 H2070" fill="none" stroke="#3daee9" stroke-width="1.2"/>
<path d="M2104 1478 L2110 1485 H2098 Z" fill="#eee"/>
<circle cx="1746" cy="1481" r="9" fill="none" stroke="#1e88e5" stroke-width="5"/><path d="M1750 1485 L1755 1490" stroke="#1e88e5" stroke-width="3"/>
<g fill="none" stroke="#6fc96f" stroke-width="2"><circle cx="1772" cy="1475" r="3"/><circle cx="1780" cy="1475" r="3"/></g><path d="M1772 1478 L1779 1489 M1780 1478 L1773 1489" stroke="#ddd" stroke-width="2"/>
<rect x="1795" y="1470" width="22" height="22" rx="4" fill="#f4f4f4"/><path d="M1799 1486 V1476 L1806 1482 L1813 1476 V1486" fill="none" stroke="#2e7fd6" stroke-width="2.5"/>
<g fill="#ccc"><rect x="1826" y="1476" width="2" height="10"/><rect x="1826" y="1488" width="2" height="2"/><rect x="1831" y="1476" width="2" height="14"/><rect x="1836" y="1476" width="2" height="14"/><rect x="1841" y="1472" width="2" height="18"/><rect x="1835" y="1472" width="10" height="2"/></g>
<circle cx="1866" cy="1481" r="9.5" fill="#27ae60"/><circle cx="1866" cy="1481" r="7" fill="#fff"/><path d="M1863 1477 L1868 1481 L1863 1485" fill="none" stroke="#1e88e5" stroke-width="1.6"/>
<circle cx="1896" cy="1481" r="8" fill="none" stroke="#eee" stroke-width="1.4"/><path d="M1896 1486 V1477 M1892.5 1480.5 L1896 1477 L1899.5 1480.5" stroke="#eee" stroke-width="2" fill="none"/><circle cx="1902" cy="1487" r="3" fill="#3daee9"/>
<circle cx="1986" cy="1481" r="9" fill="#f0a44b" stroke="#ddd" stroke-width="1"/><path d="M1986 1486 V1477 M1982.5 1480.5 L1986 1477 L1989.5 1480.5" stroke="#fff" stroke-width="2" fill="none"/>
<text x="2124" y="1484" font-family="Liberation Sans" font-size="16.5" fill="#eee">11:24 下午</text>
<text x="2131" y="1497" font-family="Liberation Sans" font-size="12.5" fill="#eee">2025/2/11</text>
</svg>
</body></html>
